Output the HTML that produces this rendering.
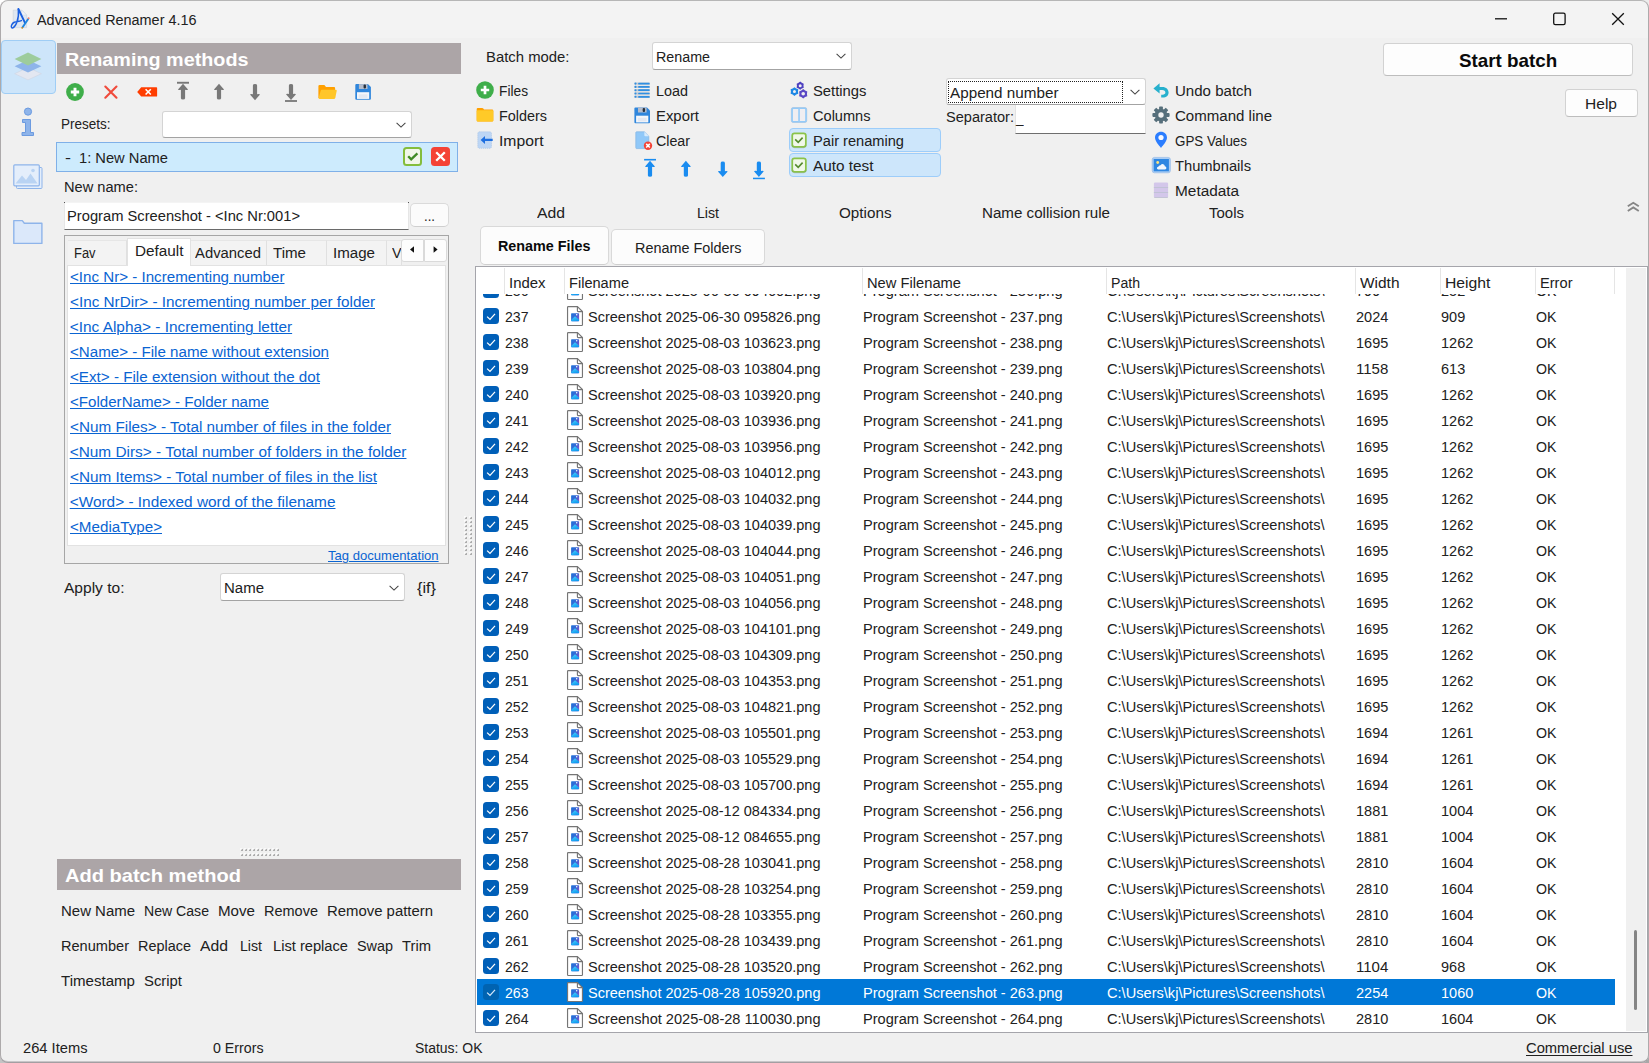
<!DOCTYPE html><html><head><meta charset="utf-8"><title>Advanced Renamer 4.16</title><style>
html,body{margin:0;padding:0;background:#fff;}
body{width:1649px;height:1063px;overflow:hidden;position:relative;font-family:"Liberation Sans", sans-serif;font-size:15.4px;color:#212121;}
#win{position:absolute;left:0;top:0;width:1649px;height:1063px;overflow:hidden;}
#win div{position:absolute;box-sizing:border-box;}
#win svg{position:absolute;overflow:visible;}
.t{position:absolute;white-space:pre;line-height:1;transform-origin:0 50%;}
.lnk{text-decoration:underline;text-underline-offset:1px;text-decoration-thickness:1px;}

</style></head><body><div id="win">
<div style="left:0px;top:1051px;width:12px;height:12px;background:#c4c4c4;"></div>
<div style="left:1637px;top:1051px;width:12px;height:12px;background:#a8a8a8;"></div>
<div style="left:1637px;top:0px;width:12px;height:12px;background:#ececec;"></div>
<div style="left:0px;top:0px;width:1649px;height:1063px;background:#f0f0f0;border-radius:8px;"></div>
<div style="left:0px;top:0px;width:1649px;height:38px;background:#f3f3f3;border-radius:8px 8px 0 0;"></div>
<svg style="left:10px;top:7px" width="21" height="23" viewBox="0 0 21 23">
<path d="M3.2 3.2h8.6l4.8 4.8v12.6h-13.4z" fill="#dfe7f1" stroke="#ced6e0" stroke-width="0.7"/><path d="M11.8 3.2v4.8h4.8z" fill="#f2f5f9" stroke="#ced6e0" stroke-width="0.5"/>
<path d="M8.4 2C8.7 6 8.4 11.3 6.9 15.3C5.7 18.4 3.5 21.6 1.9 20.8C0.5 20 1.6 16.4 4.3 15.3C6.6 14.4 9 14.6 11.4 13.6" fill="none" stroke="#1a5fe0" stroke-width="1.5" stroke-linecap="round"/>
<path d="M8.4 2L15 15.8" fill="none" stroke="#1a5fe0" stroke-width="1.9" stroke-linecap="round"/>
<path d="M18.2 12L12.6 20.2" stroke="#1d86e0" stroke-width="1.9" stroke-linecap="round"/>
<circle cx="18.6" cy="11.2" r="1" fill="#f08070"/><circle cx="12.2" cy="20.8" r="0.9" fill="#c98a1a"/>
</svg>
<svg style="left:1494px;top:12px" width="132" height="14" viewBox="0 0 132 14" fill="none" stroke="#111" stroke-width="1.3"><path d="M1 6.8h12"/><rect x="59.7" y="1.2" width="11.4" height="11.4" rx="1.6"/><path d="M118.2 1.2L129.8 12.8M129.8 1.2L118.2 12.8"/></svg>
<div style="left:1px;top:40px;width:55px;height:54px;background:#cde5fa;border:1px solid #9fcdf5;border-radius:4px;"></div>
<svg style="left:14px;top:52px" width="28" height="28" viewBox="0 0 28 28">
<path d="M14 15.5L27.4 21.7L14 27.9L0.6 21.7Z" fill="#e3e7f1" stroke="#cfd5e3" stroke-width="0.6"/>
<path d="M14 8L27.4 14.2L14 20.4L0.6 14.2Z" fill="#8eb4ea"/>
<path d="M14 0.6L27.4 7L14 13.4L0.6 7Z" fill="#9dcc9c"/></svg>
<svg style="left:21px;top:107px" width="14" height="30" viewBox="0 0 14 30"><circle cx="7" cy="4.6" r="3.6" fill="#8eb4ea" stroke="#6c9be0" stroke-width="1"/>
<path d="M1.5 12.5h8v13h3v3h-11.5v-3h3.5v-10h-3z" fill="#8eb4ea" stroke="#6c9be0" stroke-width="1" stroke-linejoin="round"/></svg>
<svg style="left:13px;top:164px" width="30" height="26" viewBox="0 0 30 26"><rect x="3.5" y="3.5" width="25.5" height="21" rx="1" fill="#e4eefb" stroke="#8eb4ea" stroke-width="1"/>
<rect x="0.8" y="0.8" width="25.5" height="21" rx="1" fill="#e4eefb" stroke="#8eb4ea" stroke-width="1.2"/>
<path d="M2.5 19.5L9 11.5L13 16L17.5 9.5L24.5 19.5Z" fill="#b9d3f3"/><circle cx="20" cy="6.5" r="1.8" fill="#b9d3f3"/></svg>
<svg style="left:13px;top:219px" width="30" height="26" viewBox="0 0 30 26"><path d="M0.8 1.6h8.5l2 2.6h17.6v20.2h-28.1z" fill="#dbe8fa" stroke="#8eb4ea" stroke-width="1.4" stroke-linejoin="round"/></svg>
<div style="left:57px;top:43px;width:404px;height:31px;background:#aca5a7;"></div>
<svg style="left:65px;top:80px" width="310" height="24" viewBox="0 0 310 24">
<circle cx="10" cy="12" r="8.9" fill="#3fae4a"/><path d="M10 7.8v8.4M5.8 12h8.4" stroke="#fff" stroke-width="2.9"/>
<path d="M40.3 6.5L51.5 17.7M51.5 6.5L40.3 17.7" stroke="#f04b3c" stroke-width="2.1" stroke-linecap="round"/>
<path d="M72.2 12L76.2 7.3H91.4Q92.1 7.3 92.1 8V15.9Q92.1 16.6 91.4 16.6H76.2Z" fill="#ff3d00"/><path d="M80.6 9.3L85.8 14.5M85.8 9.3L80.6 14.5" stroke="#fff" stroke-width="1.6"/>
<g fill="#787878"><rect x="112" y="1.8" width="12" height="1.9"/><path d="M118 3.8L123 9.399999999999999Q122.4 10.299999999999999 120.1 9.7V18.200000000000003Q120.1 19.6 118 19.6Q115.9 19.6 115.9 18.200000000000003V9.7Q113.6 10.299999999999999 113 9.399999999999999Z"/>
<path d="M154 3.8L159 9.399999999999999Q158.4 10.299999999999999 156.1 9.7V18.200000000000003Q156.1 19.6 154 19.6Q151.9 19.6 151.9 18.200000000000003V9.7Q149.6 10.299999999999999 149 9.399999999999999Z"/>
<path d="M190 20.2L195 14.6Q194.4 13.7 192.1 14.299999999999999V5.5Q192.1 4.1 190 4.1Q187.9 4.1 187.9 5.5V14.299999999999999Q185.6 13.7 185 14.6Z"/>
<path d="M226 19.9L231 14.299999999999999Q230.4 13.399999999999999 228.1 13.999999999999998V5.5Q228.1 4.1 226 4.1Q223.9 4.1 223.9 5.5V13.999999999999998Q221.6 13.399999999999999 221 14.299999999999999Z"/><rect x="220" y="20.1" width="12" height="1.8"/></g>
<path d="M254.6 4.9H259.4L261.0 6.9H269.09999999999997Q270.09999999999997 6.9 270.09999999999997 7.9V17.9H253.4V6.1000000000000005Q253.4 4.9 254.6 4.9Z" fill="#ffa000"/><path d="M256.8 9.8H270.9Q271.9 9.8 271.7 10.9L270.2 17.9Q270.0 18.9 269.0 18.9H254.4Q253.4 18.9 253.70000000000002 17.7L255.70000000000002 10.8Q255.9 9.8 256.8 9.8Z" fill="#ffc629"/>
<path d="M291.3 4.1H302.90000000000003L305.90000000000003 7.1V18.7Q305.90000000000003 19.7 304.90000000000003 19.7H291.3Q290.3 19.7 290.3 18.7V5.1Q290.3 4.1 291.3 4.1Z" fill="#2f86dc"/><rect x="293.90000000000003" y="4.1" width="8.6" height="4.9" fill="#b4bccb"/><rect x="298.568" y="4.6" width="2.4" height="3.8" rx="1" fill="#26303c"/><rect x="292.0" y="12.2" width="12.2" height="6.699999999999999" fill="#f4f7fb"/><rect x="293.7" y="14.299999999999999" width="8.8" height="3.6" fill="#e4e9f2"/></svg>
<div style="left:162px;top:111px;width:250px;height:27px;background:#fff;border:1px solid #d4d4d4;border-bottom-color:#a3a3a3;border-radius:3px;"></div>
<svg style="left:395px;top:121px" width="12" height="8" viewBox="0 0 12 8"><path d="M1.6 1.8L6 6.1L10.4 1.8" fill="none" stroke="#444" stroke-width="1.05"/></svg>
<div style="left:56px;top:142px;width:402px;height:30px;background:#cdebfd;border:1px solid #7fb0e8;"></div>
<div style="left:403px;top:147px;width:19px;height:19px;background:#f1f6e9;border:2px solid #84bd3c;border-radius:3.5px;"></div>
<svg style="left:406px;top:150px" width="13" height="13" viewBox="0 0 13 13"><path d="M2.2 6.2L5.2 9.4L11.4 3.4" fill="none" stroke="#3f8a24" stroke-width="2.3"/></svg>
<div style="left:431px;top:147px;width:19px;height:19px;background:#f44336;border-radius:3.5px;"></div>
<svg style="left:434px;top:150px" width="13" height="13" viewBox="0 0 13 13"><path d="M2.2 2.2L10.8 10.8M10.8 2.2L2.2 10.8" fill="none" stroke="#fff" stroke-width="2.3"/></svg>
<div style="left:64px;top:202px;width:345px;height:28px;background:#fff;border:1px solid #e6e6e6;border-top-color:#f4f4f4;border-bottom:1px solid #6a6a6a;"></div>
<div style="left:64px;top:202px;width:1px;height:1px;background:#555;"></div>
<div style="left:408px;top:202px;width:1px;height:1px;background:#555;"></div>
<div style="left:410px;top:203px;width:39px;height:24px;background:#fbfbfb;border:1px solid #dadada;border-bottom-color:#cfcfcf;border-radius:5px;"></div>
<div style="left:64px;top:235px;width:385px;height:329px;border:1px solid #a6a6a6;background:#f0f0f0;"></div>
<div style="left:67px;top:265px;width:379px;height:281px;background:#fff;border:1px solid #e2e2e2;"></div>
<div style="left:68px;top:240px;width:59px;height:25px;background:#f3f3f3;border-right:1px solid #e0e0e0;border-top:1px solid #e6e6e6;"></div>
<div style="left:190px;top:240px;width:77px;height:25px;background:#f3f3f3;border-right:1px solid #e0e0e0;border-top:1px solid #e6e6e6;"></div>
<div style="left:267px;top:240px;width:60px;height:25px;background:#f3f3f3;border-right:1px solid #e0e0e0;border-top:1px solid #e6e6e6;"></div>
<div style="left:327px;top:240px;width:60px;height:25px;background:#f3f3f3;border-right:1px solid #e0e0e0;border-top:1px solid #e6e6e6;"></div>
<div style="left:387px;top:240px;width:15px;height:25px;background:#f3f3f3;border-right:1px solid #e0e0e0;border-top:1px solid #e6e6e6;"></div>
<div style="left:127px;top:238px;width:64px;height:28px;background:#fff;border:1px solid #e2e2e2;border-bottom:none;"></div>
<div style="left:387px;top:241px;width:14px;height:23px;overflow:hidden;"><span class="t" style="left:4.5px;top:4px;transform:scaleX(.93);">V</span></div>
<div style="left:401px;top:239px;width:23px;height:23px;background:#fdfdfd;border:1px solid #dadada;border-radius:3px 0 0 3px;"></div>
<div style="left:424px;top:239px;width:23px;height:23px;background:#fdfdfd;border:1px solid #dadada;border-radius:0 3px 3px 0;"></div>
<svg style="left:401px;top:239px" width="46" height="23" viewBox="0 0 46 23"><path d="M13 7.2v6.6L9 10.5Z M32.6 7.2v6.6L36.6 10.5Z" fill="#111"/></svg>
<div style="left:220px;top:573px;width:185px;height:28px;background:#fff;border:1px solid #d4d4d4;border-bottom-color:#a3a3a3;border-radius:3px;"></div>
<svg style="left:388px;top:584px" width="12" height="8" viewBox="0 0 12 8"><path d="M1.6 1.8L6 6.1L10.4 1.8" fill="none" stroke="#444" stroke-width="1.05"/></svg>
<svg style="left:0;top:0" width="480" height="860" viewBox="0 0 480 860" shape-rendering="crispEdges"><path d="M240 848h2v2h-2z" fill="#fafafa"/><path d="M241 849h2v2h-2z" fill="#adadad"/><path d="M241 849h1v1h-1z" fill="#dedede"/><path d="M240 853h2v2h-2z" fill="#fafafa"/><path d="M241 854h2v2h-2z" fill="#adadad"/><path d="M241 854h1v1h-1z" fill="#dedede"/><path d="M244 848h2v2h-2z" fill="#fafafa"/><path d="M245 849h2v2h-2z" fill="#adadad"/><path d="M245 849h1v1h-1z" fill="#dedede"/><path d="M244 853h2v2h-2z" fill="#fafafa"/><path d="M245 854h2v2h-2z" fill="#adadad"/><path d="M245 854h1v1h-1z" fill="#dedede"/><path d="M248 848h2v2h-2z" fill="#fafafa"/><path d="M249 849h2v2h-2z" fill="#adadad"/><path d="M249 849h1v1h-1z" fill="#dedede"/><path d="M248 853h2v2h-2z" fill="#fafafa"/><path d="M249 854h2v2h-2z" fill="#adadad"/><path d="M249 854h1v1h-1z" fill="#dedede"/><path d="M252 848h2v2h-2z" fill="#fafafa"/><path d="M253 849h2v2h-2z" fill="#adadad"/><path d="M253 849h1v1h-1z" fill="#dedede"/><path d="M252 853h2v2h-2z" fill="#fafafa"/><path d="M253 854h2v2h-2z" fill="#adadad"/><path d="M253 854h1v1h-1z" fill="#dedede"/><path d="M256 848h2v2h-2z" fill="#fafafa"/><path d="M257 849h2v2h-2z" fill="#adadad"/><path d="M257 849h1v1h-1z" fill="#dedede"/><path d="M256 853h2v2h-2z" fill="#fafafa"/><path d="M257 854h2v2h-2z" fill="#adadad"/><path d="M257 854h1v1h-1z" fill="#dedede"/><path d="M260 848h2v2h-2z" fill="#fafafa"/><path d="M261 849h2v2h-2z" fill="#adadad"/><path d="M261 849h1v1h-1z" fill="#dedede"/><path d="M260 853h2v2h-2z" fill="#fafafa"/><path d="M261 854h2v2h-2z" fill="#adadad"/><path d="M261 854h1v1h-1z" fill="#dedede"/><path d="M264 848h2v2h-2z" fill="#fafafa"/><path d="M265 849h2v2h-2z" fill="#adadad"/><path d="M265 849h1v1h-1z" fill="#dedede"/><path d="M264 853h2v2h-2z" fill="#fafafa"/><path d="M265 854h2v2h-2z" fill="#adadad"/><path d="M265 854h1v1h-1z" fill="#dedede"/><path d="M268 848h2v2h-2z" fill="#fafafa"/><path d="M269 849h2v2h-2z" fill="#adadad"/><path d="M269 849h1v1h-1z" fill="#dedede"/><path d="M268 853h2v2h-2z" fill="#fafafa"/><path d="M269 854h2v2h-2z" fill="#adadad"/><path d="M269 854h1v1h-1z" fill="#dedede"/><path d="M272 848h2v2h-2z" fill="#fafafa"/><path d="M273 849h2v2h-2z" fill="#adadad"/><path d="M273 849h1v1h-1z" fill="#dedede"/><path d="M272 853h2v2h-2z" fill="#fafafa"/><path d="M273 854h2v2h-2z" fill="#adadad"/><path d="M273 854h1v1h-1z" fill="#dedede"/><path d="M276 848h2v2h-2z" fill="#fafafa"/><path d="M277 849h2v2h-2z" fill="#adadad"/><path d="M277 849h1v1h-1z" fill="#dedede"/><path d="M276 853h2v2h-2z" fill="#fafafa"/><path d="M277 854h2v2h-2z" fill="#adadad"/><path d="M277 854h1v1h-1z" fill="#dedede"/><path d="M464 516h2v2h-2z" fill="#fafafa"/><path d="M465 517h2v2h-2z" fill="#adadad"/><path d="M465 517h1v1h-1z" fill="#dedede"/><path d="M464 520h2v2h-2z" fill="#fafafa"/><path d="M465 521h2v2h-2z" fill="#adadad"/><path d="M465 521h1v1h-1z" fill="#dedede"/><path d="M464 524h2v2h-2z" fill="#fafafa"/><path d="M465 525h2v2h-2z" fill="#adadad"/><path d="M465 525h1v1h-1z" fill="#dedede"/><path d="M464 528h2v2h-2z" fill="#fafafa"/><path d="M465 529h2v2h-2z" fill="#adadad"/><path d="M465 529h1v1h-1z" fill="#dedede"/><path d="M464 532h2v2h-2z" fill="#fafafa"/><path d="M465 533h2v2h-2z" fill="#adadad"/><path d="M465 533h1v1h-1z" fill="#dedede"/><path d="M464 536h2v2h-2z" fill="#fafafa"/><path d="M465 537h2v2h-2z" fill="#adadad"/><path d="M465 537h1v1h-1z" fill="#dedede"/><path d="M464 540h2v2h-2z" fill="#fafafa"/><path d="M465 541h2v2h-2z" fill="#adadad"/><path d="M465 541h1v1h-1z" fill="#dedede"/><path d="M464 544h2v2h-2z" fill="#fafafa"/><path d="M465 545h2v2h-2z" fill="#adadad"/><path d="M465 545h1v1h-1z" fill="#dedede"/><path d="M464 548h2v2h-2z" fill="#fafafa"/><path d="M465 549h2v2h-2z" fill="#adadad"/><path d="M465 549h1v1h-1z" fill="#dedede"/><path d="M464 552h2v2h-2z" fill="#fafafa"/><path d="M465 553h2v2h-2z" fill="#adadad"/><path d="M465 553h1v1h-1z" fill="#dedede"/><path d="M469 516h2v2h-2z" fill="#fafafa"/><path d="M470 517h2v2h-2z" fill="#adadad"/><path d="M470 517h1v1h-1z" fill="#dedede"/><path d="M469 520h2v2h-2z" fill="#fafafa"/><path d="M470 521h2v2h-2z" fill="#adadad"/><path d="M470 521h1v1h-1z" fill="#dedede"/><path d="M469 524h2v2h-2z" fill="#fafafa"/><path d="M470 525h2v2h-2z" fill="#adadad"/><path d="M470 525h1v1h-1z" fill="#dedede"/><path d="M469 528h2v2h-2z" fill="#fafafa"/><path d="M470 529h2v2h-2z" fill="#adadad"/><path d="M470 529h1v1h-1z" fill="#dedede"/><path d="M469 532h2v2h-2z" fill="#fafafa"/><path d="M470 533h2v2h-2z" fill="#adadad"/><path d="M470 533h1v1h-1z" fill="#dedede"/><path d="M469 536h2v2h-2z" fill="#fafafa"/><path d="M470 537h2v2h-2z" fill="#adadad"/><path d="M470 537h1v1h-1z" fill="#dedede"/><path d="M469 540h2v2h-2z" fill="#fafafa"/><path d="M470 541h2v2h-2z" fill="#adadad"/><path d="M470 541h1v1h-1z" fill="#dedede"/><path d="M469 544h2v2h-2z" fill="#fafafa"/><path d="M470 545h2v2h-2z" fill="#adadad"/><path d="M470 545h1v1h-1z" fill="#dedede"/><path d="M469 548h2v2h-2z" fill="#fafafa"/><path d="M470 549h2v2h-2z" fill="#adadad"/><path d="M470 549h1v1h-1z" fill="#dedede"/><path d="M469 552h2v2h-2z" fill="#fafafa"/><path d="M470 553h2v2h-2z" fill="#adadad"/><path d="M470 553h1v1h-1z" fill="#dedede"/></svg>
<div style="left:57px;top:859px;width:404px;height:31px;background:#aca5a7;"></div>
<div style="left:652px;top:42px;width:200px;height:28px;background:#fff;border:1px solid #d4d4d4;border-bottom-color:#a3a3a3;border-radius:3px;"></div>
<svg style="left:835px;top:52px" width="12" height="8" viewBox="0 0 12 8"><path d="M1.6 1.8L6 6.1L10.4 1.8" fill="none" stroke="#444" stroke-width="1.05"/></svg>
<div style="left:1383px;top:43px;width:250px;height:33px;background:#fdfdfd;border:1px solid #d2d2d2;border-bottom-color:#bdbdbd;border-radius:4px;"></div>
<div style="left:1565px;top:89px;width:73px;height:28px;background:#fdfdfd;border:1px solid #d2d2d2;border-bottom-color:#bdbdbd;border-radius:4px;"></div>
<svg style="left:476px;top:81px" width="18" height="18" viewBox="0 0 18 18"><circle cx="9" cy="9" r="8.8" fill="#3fae4a"/><path d="M9 4.8v8.4M4.8 9h8.4" stroke="#fff" stroke-width="2.7"/></svg>
<svg style="left:476px;top:107px" width="18" height="16" viewBox="0 0 18 16"><path d="M0.7 2.1Q0.7 0.9 1.9 0.9H6.2Q6.9 0.9 7.3 1.5L8 2.6H16.1Q17.3 2.6 17.3 3.8V13.4Q17.3 14.5 16.1 14.5H1.9Q0.7 14.5 0.7 13.4Z" fill="#ffa000"/><path d="M0.7 4.2Q0.7 3.2 1.7 3.2H16.3Q17.3 3.2 17.3 4.2V13.4Q17.3 14.5 16.1 14.5H1.9Q0.7 14.5 0.7 13.4Z" fill="#ffca28"/></svg>
<svg style="left:477px;top:131px" width="17" height="18" viewBox="0 0 17 18"><rect x="0.8" y="0.8" width="13.7" height="16.5" rx="1.6" fill="#bdd6f5" stroke="#a3bfe2" stroke-width="0.6" stroke-dasharray="1.2 0.8"/><path d="M3.6 8.9L8 4.9V7.8H15.7V10H8V12.9Z" fill="#1e6fe0"/></svg>
<svg style="left:634px;top:82px" width="17" height="17" viewBox="0 0 17 17"><rect x="0.3" y="0.4" width="15.6" height="2.4" rx="0.6" fill="#c3cbd4"/><circle cx="1.5" cy="1.6" r="1.05" fill="#2f8fe2"/><rect x="4.2" y="0.75" width="11.4" height="1.7" rx="0.5" fill="#2f8fe2"/><rect x="0.3" y="3.7" width="15.6" height="2.4" rx="0.6" fill="#c3cbd4"/><circle cx="1.5" cy="4.9" r="1.05" fill="#2f8fe2"/><rect x="4.2" y="4.05" width="11.4" height="1.7" rx="0.5" fill="#2f8fe2"/><rect x="0.3" y="7.0" width="15.6" height="2.4" rx="0.6" fill="#c3cbd4"/><circle cx="1.5" cy="8.2" r="1.05" fill="#2f8fe2"/><rect x="4.2" y="7.35" width="11.4" height="1.7" rx="0.5" fill="#2f8fe2"/><rect x="0.3" y="10.3" width="15.6" height="2.4" rx="0.6" fill="#c3cbd4"/><circle cx="1.5" cy="11.5" r="1.05" fill="#2f8fe2"/><rect x="4.2" y="10.65" width="11.4" height="1.7" rx="0.5" fill="#2f8fe2"/><rect x="0.3" y="13.6" width="15.6" height="2.4" rx="0.6" fill="#c3cbd4"/><circle cx="1.5" cy="14.8" r="1.05" fill="#2f8fe2"/><rect x="4.2" y="13.95" width="11.4" height="1.7" rx="0.5" fill="#2f8fe2"/></svg>
<svg style="left:634px;top:107px" width="17" height="17" viewBox="0 0 17 17"><path d="M1.4 0.6H13.0L16.0 3.6V15.2Q16.0 16.2 15.0 16.2H1.4Q0.4 16.2 0.4 15.2V1.6Q0.4 0.6 1.4 0.6Z" fill="#2f86dc"/><rect x="4.0" y="0.6" width="8.6" height="4.9" fill="#b4bccb"/><rect x="8.668000000000001" y="1.1" width="2.4" height="3.8" rx="1" fill="#26303c"/><rect x="2.1" y="8.7" width="12.2" height="6.699999999999999" fill="#f4f7fb"/><rect x="3.8" y="10.799999999999999" width="8.8" height="3.6" fill="#e4e9f2"/></svg>
<svg style="left:635px;top:131px" width="19" height="19" viewBox="0 0 19 19"><path d="M1.6 0.8H9.4L13.8 5.2V16.8Q13.8 17.6 13 17.6H1.6Q0.8 17.6 0.8 16.8V1.6Q0.8 0.8 1.6 0.8Z" fill="#90c8f8" stroke="#82b4e4" stroke-width="0.7"/><path d="M9.4 0.8V4.4Q9.4 5.2 10.2 5.2H13.8Z" fill="#d6eafc"/><circle cx="13" cy="14.7" r="4.2" fill="#f44336"/><path d="M11.2 12.9L14.8 16.5M14.8 12.9L11.2 16.5" stroke="#fff" stroke-width="1.5"/></svg>
<svg style="left:640px;top:157px" width="130" height="24" viewBox="0 0 130 24"><g fill="#1a8cf0">
<rect x="4.1" y="1.9" width="11.9" height="1.6"/><path d="M10 3.8L14.9 9.399999999999999Q14.3 10.299999999999999 12.1 9.7V18.400000000000002Q12.1 19.8 10 19.8Q7.9 19.8 7.9 18.400000000000002V9.7Q5.699999999999999 10.299999999999999 5.1 9.399999999999999Z"/>
<path d="M45.9 3.8L50.8 9.399999999999999Q50.199999999999996 10.299999999999999 48.0 9.7V18.400000000000002Q48.0 19.8 45.9 19.8Q43.8 19.8 43.8 18.400000000000002V9.7Q41.6 10.299999999999999 41.0 9.399999999999999Z"/>
<path d="M82.8 20.1L87.7 14.500000000000002Q87.10000000000001 13.600000000000001 84.89999999999999 14.200000000000001V5.9Q84.89999999999999 4.5 82.8 4.5Q80.7 4.5 80.7 5.9V14.200000000000001Q78.49999999999999 13.600000000000001 77.89999999999999 14.500000000000002Z"/>
<path d="M118.9 19.9L123.80000000000001 14.299999999999999Q123.20000000000002 13.399999999999999 121.0 13.999999999999998V5.9Q121.0 4.5 118.9 4.5Q116.80000000000001 4.5 116.80000000000001 5.9V13.999999999999998Q114.6 13.399999999999999 114.0 14.299999999999999Z"/><rect x="113" y="20.7" width="11.9" height="1.5"/></g></svg>
<svg style="left:789px;top:80px" width="20" height="20" viewBox="0 0 20 20"><path d="M5.45 7.15L7.21 8.50L9.26 9.35L8.97 11.55L9.26 13.75L7.21 14.60L5.45 15.95L3.69 14.60L1.64 13.75L1.93 11.55L1.64 9.35L3.69 8.50ZM6.95 11.55A1.5 1.5 0 1 0 3.95 11.55A1.5 1.5 0 1 0 6.95 11.55Z" fill="#1e88e5" fill-rule="evenodd"/><path d="M11.20 1.60L12.84 2.86L14.75 3.65L14.48 5.70L14.75 7.75L12.84 8.54L11.20 9.80L9.56 8.54L7.65 7.75L7.92 5.70L7.65 3.65L9.56 2.86ZM12.70 5.70A1.5 1.5 0 1 0 9.70 5.70A1.5 1.5 0 1 0 12.70 5.70Z" fill="#4d40c0" fill-rule="evenodd"/><path d="M14.20 9.10L16.08 10.54L18.27 11.45L17.96 13.80L18.27 16.15L16.08 17.06L14.20 18.50L12.32 17.06L10.13 16.15L10.44 13.80L10.13 11.45L12.32 10.54ZM16.00 13.80A1.8 1.8 0 1 0 12.40 13.80A1.8 1.8 0 1 0 16.00 13.80Z" fill="#5a48c4" fill-rule="evenodd"/></svg>
<svg style="left:790px;top:106px" width="18" height="18" viewBox="0 0 18 18"><rect x="1.4" y="1.5" width="15.3" height="15" rx="1.7" fill="none" stroke="#7f9cc0" stroke-width="0.5" opacity="0.8"/><rect x="2.1" y="2.2" width="13.9" height="13.6" rx="1.2" fill="#f0eef1" stroke="#93caf8" stroke-width="1.6"/><rect x="8.2" y="2.2" width="1.7" height="13.6" fill="#9acdf8"/></svg>
<div style="left:789px;top:128px;width:152px;height:24px;background:#cde6fb;border:1px solid #9dcdfa;border-radius:4px;"></div>
<svg style="left:789px;top:128px" width="20" height="24" viewBox="0 0 20 24"><rect x="3.25" y="5.3" width="13.6" height="13.5" rx="2.3" fill="#f1f8e9" stroke="#8bc34a" stroke-width="1.75"/><path d="M2.9 17.2Q3.4 19.6 5.6 19.75H14.5Q16.7 19.6 17.2 17.2" fill="none" stroke="#7a9a6a" stroke-width="0.5" opacity="0.7"/><path d="M6.2 11.4L9.2 14.4L13.6 9.6" fill="none" stroke="#558b2f" stroke-width="1.6"/></svg>
<div style="left:789px;top:153px;width:152px;height:24px;background:#cde6fb;border:1px solid #9dcdfa;border-radius:4px;"></div>
<svg style="left:789px;top:153px" width="20" height="24" viewBox="0 0 20 24"><rect x="3.25" y="5.3" width="13.6" height="13.5" rx="2.3" fill="#f1f8e9" stroke="#8bc34a" stroke-width="1.75"/><path d="M2.9 17.2Q3.4 19.6 5.6 19.75H14.5Q16.7 19.6 17.2 17.2" fill="none" stroke="#7a9a6a" stroke-width="0.5" opacity="0.7"/><path d="M6.2 11.4L9.2 14.4L13.6 9.6" fill="none" stroke="#558b2f" stroke-width="1.6"/></svg>
<div style="left:946px;top:78px;width:200px;height:27px;background:#fff;border:1px solid #d4d4d4;border-bottom-color:#a3a3a3;border-radius:3px;"></div>
<div style="left:948px;top:81px;width:175px;height:22px;border:1px dotted #222;"></div>
<svg style="left:1129px;top:88px" width="12" height="8" viewBox="0 0 12 8"><path d="M1.6 1.8L6 6.1L10.4 1.8" fill="none" stroke="#444" stroke-width="1.05"/></svg>
<div style="left:1015px;top:105px;width:131px;height:29px;background:#fff;border:1px solid #e3e3e3;border-bottom:1px solid #6e6e6e;border-top:none;"></div>
<svg style="left:1151px;top:81px" width="20" height="18" viewBox="0 0 20 18"><path d="M8.6 2.3L2.4 7.4L8.6 12.5V9.1H11.2C13.2 9.1 14.4 10 14.4 11.5C14.4 12.9 13.3 13.7 11.6 13.7H10.2V16.6H11.8C15.3 16.6 17.6 14.6 17.6 11.5C17.6 8.3 15.2 5.9 11.4 5.9H8.6Z" fill="#27b0cd"/></svg>
<svg style="left:1152px;top:106px" width="18" height="18" viewBox="0 0 18 18"><g transform="translate(9 9)"><g fill="#566f7b"><rect x="-1.9" y="-8.6" width="3.8" height="17.2" rx="0.8"/><rect x="-1.9" y="-8.6" width="3.8" height="17.2" rx="0.8" transform="rotate(45)"/><rect x="-1.9" y="-8.6" width="3.8" height="17.2" rx="0.8" transform="rotate(90)"/><rect x="-1.9" y="-8.6" width="3.8" height="17.2" rx="0.8" transform="rotate(135)"/><circle r="6.3"/></g><circle r="2.7" fill="#f0f0f0"/></g></svg>
<svg style="left:1154px;top:131px" width="14" height="18" viewBox="0 0 14 18"><path d="M7 0.7C3.6 0.7 1 3.3 1 6.6C1 10.4 5 14.4 7 17C9 14.4 13 10.4 13 6.6C13 3.3 10.4 0.7 7 0.7Z" fill="#2b7dff"/><circle cx="7" cy="6.5" r="2.6" fill="#f6f9ff"/></svg>
<svg style="left:1151px;top:156px" width="21" height="18" viewBox="0 0 21 18"><rect x="1.2" y="1.4" width="18.2" height="15.4" rx="2.2" fill="#a9cdf5" stroke="#8fb6e6" stroke-width="0.6"/><rect x="2.7" y="3" width="15.2" height="12.3" fill="#2f87e2"/><circle cx="6.7" cy="6.5" r="1.4" fill="#ffe27a"/><path d="M7.2 13.4Q5.9 13.4 5.9 12.1Q5.9 10.9 7.3 10.8Q7.8 9.1 9.6 9.2Q10.6 7.7 12.3 8.2Q13.8 8.7 13.8 10.3Q15.4 10.5 15.4 12Q15.4 13.4 14 13.4Z" fill="#f2f7fd"/></svg>
<svg style="left:1153px;top:182px" width="16" height="16" viewBox="0 0 16 16"><rect x="0.9" y="0.5" width="14.2" height="14.9" rx="1.2" fill="#d3c7ea"/><path d="M0.9 5.5H15.1M0.9 10.5H15.1" stroke="#bcc0d0" stroke-width="0.8"/><path d="M1.2 15.5H14.8" stroke="#b0b4c4" stroke-width="0.6"/></svg>
<svg style="left:1627px;top:201px" width="13" height="12" viewBox="0 0 13 12"><path d="M0.8 5.3L6.3 1.8L11.8 5.3M0.8 10L6.3 6.5L11.8 10" fill="none" stroke="#868686" stroke-width="1.9"/></svg>
<div style="left:480px;top:226px;width:129px;height:39px;background:#fcfcfc;border:1px solid #d9d9d9;border-bottom-color:#cfcfcf;border-radius:5px;"></div>
<div style="left:611px;top:229px;width:154px;height:36px;background:#fcfcfc;border:1px solid #d9d9d9;border-bottom-color:#cfcfcf;border-radius:5px;"></div>
<svg width="0" height="0" style="left:0;top:0"><defs><linearGradient id="pg" x1="0" y1="0" x2="1" y2="0.6"><stop offset="0" stop-color="#1d74da"/><stop offset="0.6" stop-color="#3a66d4"/><stop offset="1" stop-color="#7a52c8"/></linearGradient><linearGradient id="pm" x1="0" y1="0" x2="0.5" y2="1"><stop offset="0" stop-color="#4cd8ff"/><stop offset="1" stop-color="#129af0"/></linearGradient></defs></svg>
<div style="left:475px;top:266px;width:1173px;height:767px;background:#fff;border:1px solid #a5a5ab;"></div>
<div style="left:1626px;top:268px;width:20px;height:763px;background:#f0f0f0;"></div>
<div style="left:1634px;top:930px;width:3px;height:80px;background:#858585;border-radius:1.5px;"></div>
<div style="left:483px;top:282px;width:16px;height:16px;background:#005fb8;border-radius:3.5px;"></div>
<svg style="left:483px;top:282px" width="16" height="16" viewBox="0 0 16 16"><path d="M4.1 8.6L7 11.4L12 5.8" fill="none" stroke="#fff" stroke-width="1.25"/></svg>
<svg style="left:567px;top:280px" width="16" height="20" viewBox="0 0 16 20"><path d="M1.3 0.55H10.4L15.45 5.6V18.7Q15.45 19.45 14.7 19.45H1.3Q0.55 19.45 0.55 18.7V1.3Q0.55 0.55 1.3 0.55Z" fill="#fff" stroke="#757575" stroke-width="1.15"/><path d="M10.4 0.55V4.8Q10.4 5.6 11.2 5.6H15.45" fill="none" stroke="#757575" stroke-width="1.15"/><rect x="4.1" y="7.3" width="8" height="7.9" rx="0.7" fill="url(#pg)"/><path d="M4.1 14.1L8 10.2L12.1 13.5V14.5Q12.1 15.2 11.4 15.2H4.8Q4.1 15.2 4.1 14.5Z" fill="url(#pm)"/><circle cx="9.7" cy="8.8" r="0.75" fill="#fff"/></svg>
<div style="left:483px;top:308px;width:16px;height:16px;background:#005fb8;border-radius:3.5px;"></div>
<svg style="left:483px;top:308px" width="16" height="16" viewBox="0 0 16 16"><path d="M4.1 8.6L7 11.4L12 5.8" fill="none" stroke="#fff" stroke-width="1.25"/></svg>
<svg style="left:567px;top:306px" width="16" height="20" viewBox="0 0 16 20"><path d="M1.3 0.55H10.4L15.45 5.6V18.7Q15.45 19.45 14.7 19.45H1.3Q0.55 19.45 0.55 18.7V1.3Q0.55 0.55 1.3 0.55Z" fill="#fff" stroke="#757575" stroke-width="1.15"/><path d="M10.4 0.55V4.8Q10.4 5.6 11.2 5.6H15.45" fill="none" stroke="#757575" stroke-width="1.15"/><rect x="4.1" y="7.3" width="8" height="7.9" rx="0.7" fill="url(#pg)"/><path d="M4.1 14.1L8 10.2L12.1 13.5V14.5Q12.1 15.2 11.4 15.2H4.8Q4.1 15.2 4.1 14.5Z" fill="url(#pm)"/><circle cx="9.7" cy="8.8" r="0.75" fill="#fff"/></svg>
<div style="left:483px;top:334px;width:16px;height:16px;background:#005fb8;border-radius:3.5px;"></div>
<svg style="left:483px;top:334px" width="16" height="16" viewBox="0 0 16 16"><path d="M4.1 8.6L7 11.4L12 5.8" fill="none" stroke="#fff" stroke-width="1.25"/></svg>
<svg style="left:567px;top:332px" width="16" height="20" viewBox="0 0 16 20"><path d="M1.3 0.55H10.4L15.45 5.6V18.7Q15.45 19.45 14.7 19.45H1.3Q0.55 19.45 0.55 18.7V1.3Q0.55 0.55 1.3 0.55Z" fill="#fff" stroke="#757575" stroke-width="1.15"/><path d="M10.4 0.55V4.8Q10.4 5.6 11.2 5.6H15.45" fill="none" stroke="#757575" stroke-width="1.15"/><rect x="4.1" y="7.3" width="8" height="7.9" rx="0.7" fill="url(#pg)"/><path d="M4.1 14.1L8 10.2L12.1 13.5V14.5Q12.1 15.2 11.4 15.2H4.8Q4.1 15.2 4.1 14.5Z" fill="url(#pm)"/><circle cx="9.7" cy="8.8" r="0.75" fill="#fff"/></svg>
<div style="left:483px;top:360px;width:16px;height:16px;background:#005fb8;border-radius:3.5px;"></div>
<svg style="left:483px;top:360px" width="16" height="16" viewBox="0 0 16 16"><path d="M4.1 8.6L7 11.4L12 5.8" fill="none" stroke="#fff" stroke-width="1.25"/></svg>
<svg style="left:567px;top:358px" width="16" height="20" viewBox="0 0 16 20"><path d="M1.3 0.55H10.4L15.45 5.6V18.7Q15.45 19.45 14.7 19.45H1.3Q0.55 19.45 0.55 18.7V1.3Q0.55 0.55 1.3 0.55Z" fill="#fff" stroke="#757575" stroke-width="1.15"/><path d="M10.4 0.55V4.8Q10.4 5.6 11.2 5.6H15.45" fill="none" stroke="#757575" stroke-width="1.15"/><rect x="4.1" y="7.3" width="8" height="7.9" rx="0.7" fill="url(#pg)"/><path d="M4.1 14.1L8 10.2L12.1 13.5V14.5Q12.1 15.2 11.4 15.2H4.8Q4.1 15.2 4.1 14.5Z" fill="url(#pm)"/><circle cx="9.7" cy="8.8" r="0.75" fill="#fff"/></svg>
<div style="left:483px;top:386px;width:16px;height:16px;background:#005fb8;border-radius:3.5px;"></div>
<svg style="left:483px;top:386px" width="16" height="16" viewBox="0 0 16 16"><path d="M4.1 8.6L7 11.4L12 5.8" fill="none" stroke="#fff" stroke-width="1.25"/></svg>
<svg style="left:567px;top:384px" width="16" height="20" viewBox="0 0 16 20"><path d="M1.3 0.55H10.4L15.45 5.6V18.7Q15.45 19.45 14.7 19.45H1.3Q0.55 19.45 0.55 18.7V1.3Q0.55 0.55 1.3 0.55Z" fill="#fff" stroke="#757575" stroke-width="1.15"/><path d="M10.4 0.55V4.8Q10.4 5.6 11.2 5.6H15.45" fill="none" stroke="#757575" stroke-width="1.15"/><rect x="4.1" y="7.3" width="8" height="7.9" rx="0.7" fill="url(#pg)"/><path d="M4.1 14.1L8 10.2L12.1 13.5V14.5Q12.1 15.2 11.4 15.2H4.8Q4.1 15.2 4.1 14.5Z" fill="url(#pm)"/><circle cx="9.7" cy="8.8" r="0.75" fill="#fff"/></svg>
<div style="left:483px;top:412px;width:16px;height:16px;background:#005fb8;border-radius:3.5px;"></div>
<svg style="left:483px;top:412px" width="16" height="16" viewBox="0 0 16 16"><path d="M4.1 8.6L7 11.4L12 5.8" fill="none" stroke="#fff" stroke-width="1.25"/></svg>
<svg style="left:567px;top:410px" width="16" height="20" viewBox="0 0 16 20"><path d="M1.3 0.55H10.4L15.45 5.6V18.7Q15.45 19.45 14.7 19.45H1.3Q0.55 19.45 0.55 18.7V1.3Q0.55 0.55 1.3 0.55Z" fill="#fff" stroke="#757575" stroke-width="1.15"/><path d="M10.4 0.55V4.8Q10.4 5.6 11.2 5.6H15.45" fill="none" stroke="#757575" stroke-width="1.15"/><rect x="4.1" y="7.3" width="8" height="7.9" rx="0.7" fill="url(#pg)"/><path d="M4.1 14.1L8 10.2L12.1 13.5V14.5Q12.1 15.2 11.4 15.2H4.8Q4.1 15.2 4.1 14.5Z" fill="url(#pm)"/><circle cx="9.7" cy="8.8" r="0.75" fill="#fff"/></svg>
<div style="left:483px;top:438px;width:16px;height:16px;background:#005fb8;border-radius:3.5px;"></div>
<svg style="left:483px;top:438px" width="16" height="16" viewBox="0 0 16 16"><path d="M4.1 8.6L7 11.4L12 5.8" fill="none" stroke="#fff" stroke-width="1.25"/></svg>
<svg style="left:567px;top:436px" width="16" height="20" viewBox="0 0 16 20"><path d="M1.3 0.55H10.4L15.45 5.6V18.7Q15.45 19.45 14.7 19.45H1.3Q0.55 19.45 0.55 18.7V1.3Q0.55 0.55 1.3 0.55Z" fill="#fff" stroke="#757575" stroke-width="1.15"/><path d="M10.4 0.55V4.8Q10.4 5.6 11.2 5.6H15.45" fill="none" stroke="#757575" stroke-width="1.15"/><rect x="4.1" y="7.3" width="8" height="7.9" rx="0.7" fill="url(#pg)"/><path d="M4.1 14.1L8 10.2L12.1 13.5V14.5Q12.1 15.2 11.4 15.2H4.8Q4.1 15.2 4.1 14.5Z" fill="url(#pm)"/><circle cx="9.7" cy="8.8" r="0.75" fill="#fff"/></svg>
<div style="left:483px;top:464px;width:16px;height:16px;background:#005fb8;border-radius:3.5px;"></div>
<svg style="left:483px;top:464px" width="16" height="16" viewBox="0 0 16 16"><path d="M4.1 8.6L7 11.4L12 5.8" fill="none" stroke="#fff" stroke-width="1.25"/></svg>
<svg style="left:567px;top:462px" width="16" height="20" viewBox="0 0 16 20"><path d="M1.3 0.55H10.4L15.45 5.6V18.7Q15.45 19.45 14.7 19.45H1.3Q0.55 19.45 0.55 18.7V1.3Q0.55 0.55 1.3 0.55Z" fill="#fff" stroke="#757575" stroke-width="1.15"/><path d="M10.4 0.55V4.8Q10.4 5.6 11.2 5.6H15.45" fill="none" stroke="#757575" stroke-width="1.15"/><rect x="4.1" y="7.3" width="8" height="7.9" rx="0.7" fill="url(#pg)"/><path d="M4.1 14.1L8 10.2L12.1 13.5V14.5Q12.1 15.2 11.4 15.2H4.8Q4.1 15.2 4.1 14.5Z" fill="url(#pm)"/><circle cx="9.7" cy="8.8" r="0.75" fill="#fff"/></svg>
<div style="left:483px;top:490px;width:16px;height:16px;background:#005fb8;border-radius:3.5px;"></div>
<svg style="left:483px;top:490px" width="16" height="16" viewBox="0 0 16 16"><path d="M4.1 8.6L7 11.4L12 5.8" fill="none" stroke="#fff" stroke-width="1.25"/></svg>
<svg style="left:567px;top:488px" width="16" height="20" viewBox="0 0 16 20"><path d="M1.3 0.55H10.4L15.45 5.6V18.7Q15.45 19.45 14.7 19.45H1.3Q0.55 19.45 0.55 18.7V1.3Q0.55 0.55 1.3 0.55Z" fill="#fff" stroke="#757575" stroke-width="1.15"/><path d="M10.4 0.55V4.8Q10.4 5.6 11.2 5.6H15.45" fill="none" stroke="#757575" stroke-width="1.15"/><rect x="4.1" y="7.3" width="8" height="7.9" rx="0.7" fill="url(#pg)"/><path d="M4.1 14.1L8 10.2L12.1 13.5V14.5Q12.1 15.2 11.4 15.2H4.8Q4.1 15.2 4.1 14.5Z" fill="url(#pm)"/><circle cx="9.7" cy="8.8" r="0.75" fill="#fff"/></svg>
<div style="left:483px;top:516px;width:16px;height:16px;background:#005fb8;border-radius:3.5px;"></div>
<svg style="left:483px;top:516px" width="16" height="16" viewBox="0 0 16 16"><path d="M4.1 8.6L7 11.4L12 5.8" fill="none" stroke="#fff" stroke-width="1.25"/></svg>
<svg style="left:567px;top:514px" width="16" height="20" viewBox="0 0 16 20"><path d="M1.3 0.55H10.4L15.45 5.6V18.7Q15.45 19.45 14.7 19.45H1.3Q0.55 19.45 0.55 18.7V1.3Q0.55 0.55 1.3 0.55Z" fill="#fff" stroke="#757575" stroke-width="1.15"/><path d="M10.4 0.55V4.8Q10.4 5.6 11.2 5.6H15.45" fill="none" stroke="#757575" stroke-width="1.15"/><rect x="4.1" y="7.3" width="8" height="7.9" rx="0.7" fill="url(#pg)"/><path d="M4.1 14.1L8 10.2L12.1 13.5V14.5Q12.1 15.2 11.4 15.2H4.8Q4.1 15.2 4.1 14.5Z" fill="url(#pm)"/><circle cx="9.7" cy="8.8" r="0.75" fill="#fff"/></svg>
<div style="left:483px;top:542px;width:16px;height:16px;background:#005fb8;border-radius:3.5px;"></div>
<svg style="left:483px;top:542px" width="16" height="16" viewBox="0 0 16 16"><path d="M4.1 8.6L7 11.4L12 5.8" fill="none" stroke="#fff" stroke-width="1.25"/></svg>
<svg style="left:567px;top:540px" width="16" height="20" viewBox="0 0 16 20"><path d="M1.3 0.55H10.4L15.45 5.6V18.7Q15.45 19.45 14.7 19.45H1.3Q0.55 19.45 0.55 18.7V1.3Q0.55 0.55 1.3 0.55Z" fill="#fff" stroke="#757575" stroke-width="1.15"/><path d="M10.4 0.55V4.8Q10.4 5.6 11.2 5.6H15.45" fill="none" stroke="#757575" stroke-width="1.15"/><rect x="4.1" y="7.3" width="8" height="7.9" rx="0.7" fill="url(#pg)"/><path d="M4.1 14.1L8 10.2L12.1 13.5V14.5Q12.1 15.2 11.4 15.2H4.8Q4.1 15.2 4.1 14.5Z" fill="url(#pm)"/><circle cx="9.7" cy="8.8" r="0.75" fill="#fff"/></svg>
<div style="left:483px;top:568px;width:16px;height:16px;background:#005fb8;border-radius:3.5px;"></div>
<svg style="left:483px;top:568px" width="16" height="16" viewBox="0 0 16 16"><path d="M4.1 8.6L7 11.4L12 5.8" fill="none" stroke="#fff" stroke-width="1.25"/></svg>
<svg style="left:567px;top:566px" width="16" height="20" viewBox="0 0 16 20"><path d="M1.3 0.55H10.4L15.45 5.6V18.7Q15.45 19.45 14.7 19.45H1.3Q0.55 19.45 0.55 18.7V1.3Q0.55 0.55 1.3 0.55Z" fill="#fff" stroke="#757575" stroke-width="1.15"/><path d="M10.4 0.55V4.8Q10.4 5.6 11.2 5.6H15.45" fill="none" stroke="#757575" stroke-width="1.15"/><rect x="4.1" y="7.3" width="8" height="7.9" rx="0.7" fill="url(#pg)"/><path d="M4.1 14.1L8 10.2L12.1 13.5V14.5Q12.1 15.2 11.4 15.2H4.8Q4.1 15.2 4.1 14.5Z" fill="url(#pm)"/><circle cx="9.7" cy="8.8" r="0.75" fill="#fff"/></svg>
<div style="left:483px;top:594px;width:16px;height:16px;background:#005fb8;border-radius:3.5px;"></div>
<svg style="left:483px;top:594px" width="16" height="16" viewBox="0 0 16 16"><path d="M4.1 8.6L7 11.4L12 5.8" fill="none" stroke="#fff" stroke-width="1.25"/></svg>
<svg style="left:567px;top:592px" width="16" height="20" viewBox="0 0 16 20"><path d="M1.3 0.55H10.4L15.45 5.6V18.7Q15.45 19.45 14.7 19.45H1.3Q0.55 19.45 0.55 18.7V1.3Q0.55 0.55 1.3 0.55Z" fill="#fff" stroke="#757575" stroke-width="1.15"/><path d="M10.4 0.55V4.8Q10.4 5.6 11.2 5.6H15.45" fill="none" stroke="#757575" stroke-width="1.15"/><rect x="4.1" y="7.3" width="8" height="7.9" rx="0.7" fill="url(#pg)"/><path d="M4.1 14.1L8 10.2L12.1 13.5V14.5Q12.1 15.2 11.4 15.2H4.8Q4.1 15.2 4.1 14.5Z" fill="url(#pm)"/><circle cx="9.7" cy="8.8" r="0.75" fill="#fff"/></svg>
<div style="left:483px;top:620px;width:16px;height:16px;background:#005fb8;border-radius:3.5px;"></div>
<svg style="left:483px;top:620px" width="16" height="16" viewBox="0 0 16 16"><path d="M4.1 8.6L7 11.4L12 5.8" fill="none" stroke="#fff" stroke-width="1.25"/></svg>
<svg style="left:567px;top:618px" width="16" height="20" viewBox="0 0 16 20"><path d="M1.3 0.55H10.4L15.45 5.6V18.7Q15.45 19.45 14.7 19.45H1.3Q0.55 19.45 0.55 18.7V1.3Q0.55 0.55 1.3 0.55Z" fill="#fff" stroke="#757575" stroke-width="1.15"/><path d="M10.4 0.55V4.8Q10.4 5.6 11.2 5.6H15.45" fill="none" stroke="#757575" stroke-width="1.15"/><rect x="4.1" y="7.3" width="8" height="7.9" rx="0.7" fill="url(#pg)"/><path d="M4.1 14.1L8 10.2L12.1 13.5V14.5Q12.1 15.2 11.4 15.2H4.8Q4.1 15.2 4.1 14.5Z" fill="url(#pm)"/><circle cx="9.7" cy="8.8" r="0.75" fill="#fff"/></svg>
<div style="left:483px;top:646px;width:16px;height:16px;background:#005fb8;border-radius:3.5px;"></div>
<svg style="left:483px;top:646px" width="16" height="16" viewBox="0 0 16 16"><path d="M4.1 8.6L7 11.4L12 5.8" fill="none" stroke="#fff" stroke-width="1.25"/></svg>
<svg style="left:567px;top:644px" width="16" height="20" viewBox="0 0 16 20"><path d="M1.3 0.55H10.4L15.45 5.6V18.7Q15.45 19.45 14.7 19.45H1.3Q0.55 19.45 0.55 18.7V1.3Q0.55 0.55 1.3 0.55Z" fill="#fff" stroke="#757575" stroke-width="1.15"/><path d="M10.4 0.55V4.8Q10.4 5.6 11.2 5.6H15.45" fill="none" stroke="#757575" stroke-width="1.15"/><rect x="4.1" y="7.3" width="8" height="7.9" rx="0.7" fill="url(#pg)"/><path d="M4.1 14.1L8 10.2L12.1 13.5V14.5Q12.1 15.2 11.4 15.2H4.8Q4.1 15.2 4.1 14.5Z" fill="url(#pm)"/><circle cx="9.7" cy="8.8" r="0.75" fill="#fff"/></svg>
<div style="left:483px;top:672px;width:16px;height:16px;background:#005fb8;border-radius:3.5px;"></div>
<svg style="left:483px;top:672px" width="16" height="16" viewBox="0 0 16 16"><path d="M4.1 8.6L7 11.4L12 5.8" fill="none" stroke="#fff" stroke-width="1.25"/></svg>
<svg style="left:567px;top:670px" width="16" height="20" viewBox="0 0 16 20"><path d="M1.3 0.55H10.4L15.45 5.6V18.7Q15.45 19.45 14.7 19.45H1.3Q0.55 19.45 0.55 18.7V1.3Q0.55 0.55 1.3 0.55Z" fill="#fff" stroke="#757575" stroke-width="1.15"/><path d="M10.4 0.55V4.8Q10.4 5.6 11.2 5.6H15.45" fill="none" stroke="#757575" stroke-width="1.15"/><rect x="4.1" y="7.3" width="8" height="7.9" rx="0.7" fill="url(#pg)"/><path d="M4.1 14.1L8 10.2L12.1 13.5V14.5Q12.1 15.2 11.4 15.2H4.8Q4.1 15.2 4.1 14.5Z" fill="url(#pm)"/><circle cx="9.7" cy="8.8" r="0.75" fill="#fff"/></svg>
<div style="left:483px;top:698px;width:16px;height:16px;background:#005fb8;border-radius:3.5px;"></div>
<svg style="left:483px;top:698px" width="16" height="16" viewBox="0 0 16 16"><path d="M4.1 8.6L7 11.4L12 5.8" fill="none" stroke="#fff" stroke-width="1.25"/></svg>
<svg style="left:567px;top:696px" width="16" height="20" viewBox="0 0 16 20"><path d="M1.3 0.55H10.4L15.45 5.6V18.7Q15.45 19.45 14.7 19.45H1.3Q0.55 19.45 0.55 18.7V1.3Q0.55 0.55 1.3 0.55Z" fill="#fff" stroke="#757575" stroke-width="1.15"/><path d="M10.4 0.55V4.8Q10.4 5.6 11.2 5.6H15.45" fill="none" stroke="#757575" stroke-width="1.15"/><rect x="4.1" y="7.3" width="8" height="7.9" rx="0.7" fill="url(#pg)"/><path d="M4.1 14.1L8 10.2L12.1 13.5V14.5Q12.1 15.2 11.4 15.2H4.8Q4.1 15.2 4.1 14.5Z" fill="url(#pm)"/><circle cx="9.7" cy="8.8" r="0.75" fill="#fff"/></svg>
<div style="left:483px;top:724px;width:16px;height:16px;background:#005fb8;border-radius:3.5px;"></div>
<svg style="left:483px;top:724px" width="16" height="16" viewBox="0 0 16 16"><path d="M4.1 8.6L7 11.4L12 5.8" fill="none" stroke="#fff" stroke-width="1.25"/></svg>
<svg style="left:567px;top:722px" width="16" height="20" viewBox="0 0 16 20"><path d="M1.3 0.55H10.4L15.45 5.6V18.7Q15.45 19.45 14.7 19.45H1.3Q0.55 19.45 0.55 18.7V1.3Q0.55 0.55 1.3 0.55Z" fill="#fff" stroke="#757575" stroke-width="1.15"/><path d="M10.4 0.55V4.8Q10.4 5.6 11.2 5.6H15.45" fill="none" stroke="#757575" stroke-width="1.15"/><rect x="4.1" y="7.3" width="8" height="7.9" rx="0.7" fill="url(#pg)"/><path d="M4.1 14.1L8 10.2L12.1 13.5V14.5Q12.1 15.2 11.4 15.2H4.8Q4.1 15.2 4.1 14.5Z" fill="url(#pm)"/><circle cx="9.7" cy="8.8" r="0.75" fill="#fff"/></svg>
<div style="left:483px;top:750px;width:16px;height:16px;background:#005fb8;border-radius:3.5px;"></div>
<svg style="left:483px;top:750px" width="16" height="16" viewBox="0 0 16 16"><path d="M4.1 8.6L7 11.4L12 5.8" fill="none" stroke="#fff" stroke-width="1.25"/></svg>
<svg style="left:567px;top:748px" width="16" height="20" viewBox="0 0 16 20"><path d="M1.3 0.55H10.4L15.45 5.6V18.7Q15.45 19.45 14.7 19.45H1.3Q0.55 19.45 0.55 18.7V1.3Q0.55 0.55 1.3 0.55Z" fill="#fff" stroke="#757575" stroke-width="1.15"/><path d="M10.4 0.55V4.8Q10.4 5.6 11.2 5.6H15.45" fill="none" stroke="#757575" stroke-width="1.15"/><rect x="4.1" y="7.3" width="8" height="7.9" rx="0.7" fill="url(#pg)"/><path d="M4.1 14.1L8 10.2L12.1 13.5V14.5Q12.1 15.2 11.4 15.2H4.8Q4.1 15.2 4.1 14.5Z" fill="url(#pm)"/><circle cx="9.7" cy="8.8" r="0.75" fill="#fff"/></svg>
<div style="left:483px;top:776px;width:16px;height:16px;background:#005fb8;border-radius:3.5px;"></div>
<svg style="left:483px;top:776px" width="16" height="16" viewBox="0 0 16 16"><path d="M4.1 8.6L7 11.4L12 5.8" fill="none" stroke="#fff" stroke-width="1.25"/></svg>
<svg style="left:567px;top:774px" width="16" height="20" viewBox="0 0 16 20"><path d="M1.3 0.55H10.4L15.45 5.6V18.7Q15.45 19.45 14.7 19.45H1.3Q0.55 19.45 0.55 18.7V1.3Q0.55 0.55 1.3 0.55Z" fill="#fff" stroke="#757575" stroke-width="1.15"/><path d="M10.4 0.55V4.8Q10.4 5.6 11.2 5.6H15.45" fill="none" stroke="#757575" stroke-width="1.15"/><rect x="4.1" y="7.3" width="8" height="7.9" rx="0.7" fill="url(#pg)"/><path d="M4.1 14.1L8 10.2L12.1 13.5V14.5Q12.1 15.2 11.4 15.2H4.8Q4.1 15.2 4.1 14.5Z" fill="url(#pm)"/><circle cx="9.7" cy="8.8" r="0.75" fill="#fff"/></svg>
<div style="left:483px;top:802px;width:16px;height:16px;background:#005fb8;border-radius:3.5px;"></div>
<svg style="left:483px;top:802px" width="16" height="16" viewBox="0 0 16 16"><path d="M4.1 8.6L7 11.4L12 5.8" fill="none" stroke="#fff" stroke-width="1.25"/></svg>
<svg style="left:567px;top:800px" width="16" height="20" viewBox="0 0 16 20"><path d="M1.3 0.55H10.4L15.45 5.6V18.7Q15.45 19.45 14.7 19.45H1.3Q0.55 19.45 0.55 18.7V1.3Q0.55 0.55 1.3 0.55Z" fill="#fff" stroke="#757575" stroke-width="1.15"/><path d="M10.4 0.55V4.8Q10.4 5.6 11.2 5.6H15.45" fill="none" stroke="#757575" stroke-width="1.15"/><rect x="4.1" y="7.3" width="8" height="7.9" rx="0.7" fill="url(#pg)"/><path d="M4.1 14.1L8 10.2L12.1 13.5V14.5Q12.1 15.2 11.4 15.2H4.8Q4.1 15.2 4.1 14.5Z" fill="url(#pm)"/><circle cx="9.7" cy="8.8" r="0.75" fill="#fff"/></svg>
<div style="left:483px;top:828px;width:16px;height:16px;background:#005fb8;border-radius:3.5px;"></div>
<svg style="left:483px;top:828px" width="16" height="16" viewBox="0 0 16 16"><path d="M4.1 8.6L7 11.4L12 5.8" fill="none" stroke="#fff" stroke-width="1.25"/></svg>
<svg style="left:567px;top:826px" width="16" height="20" viewBox="0 0 16 20"><path d="M1.3 0.55H10.4L15.45 5.6V18.7Q15.45 19.45 14.7 19.45H1.3Q0.55 19.45 0.55 18.7V1.3Q0.55 0.55 1.3 0.55Z" fill="#fff" stroke="#757575" stroke-width="1.15"/><path d="M10.4 0.55V4.8Q10.4 5.6 11.2 5.6H15.45" fill="none" stroke="#757575" stroke-width="1.15"/><rect x="4.1" y="7.3" width="8" height="7.9" rx="0.7" fill="url(#pg)"/><path d="M4.1 14.1L8 10.2L12.1 13.5V14.5Q12.1 15.2 11.4 15.2H4.8Q4.1 15.2 4.1 14.5Z" fill="url(#pm)"/><circle cx="9.7" cy="8.8" r="0.75" fill="#fff"/></svg>
<div style="left:483px;top:854px;width:16px;height:16px;background:#005fb8;border-radius:3.5px;"></div>
<svg style="left:483px;top:854px" width="16" height="16" viewBox="0 0 16 16"><path d="M4.1 8.6L7 11.4L12 5.8" fill="none" stroke="#fff" stroke-width="1.25"/></svg>
<svg style="left:567px;top:852px" width="16" height="20" viewBox="0 0 16 20"><path d="M1.3 0.55H10.4L15.45 5.6V18.7Q15.45 19.45 14.7 19.45H1.3Q0.55 19.45 0.55 18.7V1.3Q0.55 0.55 1.3 0.55Z" fill="#fff" stroke="#757575" stroke-width="1.15"/><path d="M10.4 0.55V4.8Q10.4 5.6 11.2 5.6H15.45" fill="none" stroke="#757575" stroke-width="1.15"/><rect x="4.1" y="7.3" width="8" height="7.9" rx="0.7" fill="url(#pg)"/><path d="M4.1 14.1L8 10.2L12.1 13.5V14.5Q12.1 15.2 11.4 15.2H4.8Q4.1 15.2 4.1 14.5Z" fill="url(#pm)"/><circle cx="9.7" cy="8.8" r="0.75" fill="#fff"/></svg>
<div style="left:483px;top:880px;width:16px;height:16px;background:#005fb8;border-radius:3.5px;"></div>
<svg style="left:483px;top:880px" width="16" height="16" viewBox="0 0 16 16"><path d="M4.1 8.6L7 11.4L12 5.8" fill="none" stroke="#fff" stroke-width="1.25"/></svg>
<svg style="left:567px;top:878px" width="16" height="20" viewBox="0 0 16 20"><path d="M1.3 0.55H10.4L15.45 5.6V18.7Q15.45 19.45 14.7 19.45H1.3Q0.55 19.45 0.55 18.7V1.3Q0.55 0.55 1.3 0.55Z" fill="#fff" stroke="#757575" stroke-width="1.15"/><path d="M10.4 0.55V4.8Q10.4 5.6 11.2 5.6H15.45" fill="none" stroke="#757575" stroke-width="1.15"/><rect x="4.1" y="7.3" width="8" height="7.9" rx="0.7" fill="url(#pg)"/><path d="M4.1 14.1L8 10.2L12.1 13.5V14.5Q12.1 15.2 11.4 15.2H4.8Q4.1 15.2 4.1 14.5Z" fill="url(#pm)"/><circle cx="9.7" cy="8.8" r="0.75" fill="#fff"/></svg>
<div style="left:483px;top:906px;width:16px;height:16px;background:#005fb8;border-radius:3.5px;"></div>
<svg style="left:483px;top:906px" width="16" height="16" viewBox="0 0 16 16"><path d="M4.1 8.6L7 11.4L12 5.8" fill="none" stroke="#fff" stroke-width="1.25"/></svg>
<svg style="left:567px;top:904px" width="16" height="20" viewBox="0 0 16 20"><path d="M1.3 0.55H10.4L15.45 5.6V18.7Q15.45 19.45 14.7 19.45H1.3Q0.55 19.45 0.55 18.7V1.3Q0.55 0.55 1.3 0.55Z" fill="#fff" stroke="#757575" stroke-width="1.15"/><path d="M10.4 0.55V4.8Q10.4 5.6 11.2 5.6H15.45" fill="none" stroke="#757575" stroke-width="1.15"/><rect x="4.1" y="7.3" width="8" height="7.9" rx="0.7" fill="url(#pg)"/><path d="M4.1 14.1L8 10.2L12.1 13.5V14.5Q12.1 15.2 11.4 15.2H4.8Q4.1 15.2 4.1 14.5Z" fill="url(#pm)"/><circle cx="9.7" cy="8.8" r="0.75" fill="#fff"/></svg>
<div style="left:483px;top:932px;width:16px;height:16px;background:#005fb8;border-radius:3.5px;"></div>
<svg style="left:483px;top:932px" width="16" height="16" viewBox="0 0 16 16"><path d="M4.1 8.6L7 11.4L12 5.8" fill="none" stroke="#fff" stroke-width="1.25"/></svg>
<svg style="left:567px;top:930px" width="16" height="20" viewBox="0 0 16 20"><path d="M1.3 0.55H10.4L15.45 5.6V18.7Q15.45 19.45 14.7 19.45H1.3Q0.55 19.45 0.55 18.7V1.3Q0.55 0.55 1.3 0.55Z" fill="#fff" stroke="#757575" stroke-width="1.15"/><path d="M10.4 0.55V4.8Q10.4 5.6 11.2 5.6H15.45" fill="none" stroke="#757575" stroke-width="1.15"/><rect x="4.1" y="7.3" width="8" height="7.9" rx="0.7" fill="url(#pg)"/><path d="M4.1 14.1L8 10.2L12.1 13.5V14.5Q12.1 15.2 11.4 15.2H4.8Q4.1 15.2 4.1 14.5Z" fill="url(#pm)"/><circle cx="9.7" cy="8.8" r="0.75" fill="#fff"/></svg>
<div style="left:483px;top:958px;width:16px;height:16px;background:#005fb8;border-radius:3.5px;"></div>
<svg style="left:483px;top:958px" width="16" height="16" viewBox="0 0 16 16"><path d="M4.1 8.6L7 11.4L12 5.8" fill="none" stroke="#fff" stroke-width="1.25"/></svg>
<svg style="left:567px;top:956px" width="16" height="20" viewBox="0 0 16 20"><path d="M1.3 0.55H10.4L15.45 5.6V18.7Q15.45 19.45 14.7 19.45H1.3Q0.55 19.45 0.55 18.7V1.3Q0.55 0.55 1.3 0.55Z" fill="#fff" stroke="#757575" stroke-width="1.15"/><path d="M10.4 0.55V4.8Q10.4 5.6 11.2 5.6H15.45" fill="none" stroke="#757575" stroke-width="1.15"/><rect x="4.1" y="7.3" width="8" height="7.9" rx="0.7" fill="url(#pg)"/><path d="M4.1 14.1L8 10.2L12.1 13.5V14.5Q12.1 15.2 11.4 15.2H4.8Q4.1 15.2 4.1 14.5Z" fill="url(#pm)"/><circle cx="9.7" cy="8.8" r="0.75" fill="#fff"/></svg>
<div style="left:477px;top:979px;width:1138px;height:26px;background:#0078d7;"></div>
<div style="left:483px;top:984px;width:16px;height:16px;background:#0063b1;border-radius:3.5px;"></div>
<svg style="left:483px;top:984px" width="16" height="16" viewBox="0 0 16 16"><path d="M4.1 8.6L7 11.4L12 5.8" fill="none" stroke="#d6e8fa" stroke-width="1.25"/></svg>
<svg style="left:567px;top:982px" width="16" height="20" viewBox="0 0 16 20"><path d="M1.3 0.55H10.4L15.45 5.6V18.7Q15.45 19.45 14.7 19.45H1.3Q0.55 19.45 0.55 18.7V1.3Q0.55 0.55 1.3 0.55Z" fill="#fff" stroke="#757575" stroke-width="1.15"/><path d="M10.4 0.55V4.8Q10.4 5.6 11.2 5.6H15.45" fill="none" stroke="#757575" stroke-width="1.15"/><rect x="4.1" y="7.3" width="8" height="7.9" rx="0.7" fill="url(#pg)"/><path d="M4.1 14.1L8 10.2L12.1 13.5V14.5Q12.1 15.2 11.4 15.2H4.8Q4.1 15.2 4.1 14.5Z" fill="url(#pm)"/><circle cx="9.7" cy="8.8" r="0.75" fill="#fff"/></svg>
<div style="left:483px;top:1010px;width:16px;height:16px;background:#005fb8;border-radius:3.5px;"></div>
<svg style="left:483px;top:1010px" width="16" height="16" viewBox="0 0 16 16"><path d="M4.1 8.6L7 11.4L12 5.8" fill="none" stroke="#fff" stroke-width="1.25"/></svg>
<svg style="left:567px;top:1008px" width="16" height="20" viewBox="0 0 16 20"><path d="M1.3 0.55H10.4L15.45 5.6V18.7Q15.45 19.45 14.7 19.45H1.3Q0.55 19.45 0.55 18.7V1.3Q0.55 0.55 1.3 0.55Z" fill="#fff" stroke="#757575" stroke-width="1.15"/><path d="M10.4 0.55V4.8Q10.4 5.6 11.2 5.6H15.45" fill="none" stroke="#757575" stroke-width="1.15"/><rect x="4.1" y="7.3" width="8" height="7.9" rx="0.7" fill="url(#pg)"/><path d="M4.1 14.1L8 10.2L12.1 13.5V14.5Q12.1 15.2 11.4 15.2H4.8Q4.1 15.2 4.1 14.5Z" fill="url(#pm)"/><circle cx="9.7" cy="8.8" r="0.75" fill="#fff"/></svg>
<div style="left:476px;top:267px;width:1150px;height:27px;background:#fff;z-index:2;"></div>
<div style="left:504px;top:268px;width:1px;height:26px;background:#e5e5e5;z-index:3;"></div>
<div style="left:564px;top:268px;width:1px;height:26px;background:#e5e5e5;z-index:3;"></div>
<div style="left:862px;top:268px;width:1px;height:26px;background:#e5e5e5;z-index:3;"></div>
<div style="left:1106px;top:268px;width:1px;height:26px;background:#e5e5e5;z-index:3;"></div>
<div style="left:1355px;top:268px;width:1px;height:26px;background:#e5e5e5;z-index:3;"></div>
<div style="left:1440px;top:268px;width:1px;height:26px;background:#e5e5e5;z-index:3;"></div>
<div style="left:1535px;top:268px;width:1px;height:26px;background:#e5e5e5;z-index:3;"></div>
<div style="left:1614px;top:268px;width:1px;height:26px;background:#e5e5e5;z-index:3;"></div>
<div style="left:0px;top:0px;width:1649px;height:1063px;border:1px solid #adaaab;border-top-color:#b6b6b6;border-radius:8px;pointer-events:none;z-index:9;"></div>
<div style="left:0px;top:0px;width:1649px;height:1063px;border-bottom:2px solid rgba(150,146,150,.45);border-radius:8px;pointer-events:none;z-index:9;"></div>
<span class="t" style="left:37px;top:12.00px;transform:scaleX(0.9368);">Advanced Renamer 4.16</span>
<span class="t" style="left:65px;top:50.00px;font-size:19px;font-weight:700;color:#fff;transform:scaleX(1.0408);">Renaming methods</span>
<span class="t" style="left:61px;top:116.00px;transform:scaleX(0.8768);">Presets:</span>
<span class="t" style="left:64.8px;top:150.00px;transform:scaleX(1.1672);">-</span>
<span class="t" style="left:78.8px;top:150.00px;transform:scaleX(0.9546);">1: New Name</span>
<span class="t" style="left:64px;top:179.00px;transform:scaleX(0.9506);">New name:</span>
<span class="t" style="left:67px;top:208.00px;transform:scaleX(0.9557);">Program Screenshot - &lt;Inc Nr:001&gt;</span>
<span class="t" style="left:424px;top:208.00px;transform:scaleX(0.8575);">...</span>
<span class="t" style="left:73.8px;top:245.00px;transform:scaleX(0.8380);">Fav</span>
<span class="t" style="left:134.5px;top:243.00px;transform:scaleX(0.9946);">Default</span>
<span class="t" style="left:195px;top:245.00px;transform:scaleX(0.9639);">Advanced</span>
<span class="t" style="left:273px;top:245.00px;transform:scaleX(0.9810);">Time</span>
<span class="t" style="left:333px;top:245.00px;transform:scaleX(0.9817);">Image</span>
<span class="t lnk" style="left:69.7px;top:269.00px;color:#0a64d2;transform:scaleX(0.9833);">&lt;Inc Nr&gt; - Incrementing number</span>
<span class="t lnk" style="left:69.7px;top:294.00px;color:#0a64d2;transform:scaleX(0.9932);">&lt;Inc NrDir&gt; - Incrementing number per folder</span>
<span class="t lnk" style="left:69.7px;top:319.00px;color:#0a64d2;">&lt;Inc Alpha&gt; - Incrementing letter</span>
<span class="t lnk" style="left:69.7px;top:344.00px;color:#0a64d2;transform:scaleX(0.9830);">&lt;Name&gt; - File name without extension</span>
<span class="t lnk" style="left:69.7px;top:369.00px;color:#0a64d2;transform:scaleX(0.9872);">&lt;Ext&gt; - File extension without the dot</span>
<span class="t lnk" style="left:69.7px;top:394.00px;color:#0a64d2;transform:scaleX(0.9816);">&lt;FolderName&gt; - Folder name</span>
<span class="t lnk" style="left:69.7px;top:419.00px;color:#0a64d2;transform:scaleX(0.9936);">&lt;Num Files&gt; - Total number of files in the folder</span>
<span class="t lnk" style="left:69.7px;top:444.00px;color:#0a64d2;">&lt;Num Dirs&gt; - Total number of folders in the folder</span>
<span class="t lnk" style="left:69.7px;top:469.00px;color:#0a64d2;transform:scaleX(0.9951);">&lt;Num Items&gt; - Total number of files in the list</span>
<span class="t lnk" style="left:69.7px;top:494.00px;color:#0a64d2;">&lt;Word&gt; - Indexed word of the filename</span>
<span class="t lnk" style="left:69.7px;top:519.00px;color:#0a64d2;transform:scaleX(0.9864);">&lt;MediaType&gt;</span>
<span class="t lnk" style="left:327.7px;top:550.00px;font-size:12.6px;color:#0a64d2;transform:scaleX(1.0393);">Tag documentation</span>
<span class="t" style="left:64px;top:580.00px;transform:scaleX(1.0102);">Apply to:</span>
<span class="t" style="left:224px;top:580.00px;transform:scaleX(0.9741);">Name</span>
<span class="t" style="left:417px;top:580.00px;transform:scaleX(1.0565);">{if}</span>
<span class="t" style="left:65px;top:866.00px;font-size:19px;font-weight:700;color:#fff;transform:scaleX(1.0553);">Add batch method</span>
<span class="t" style="left:61px;top:903.00px;transform:scaleX(0.9721);">New Name</span>
<span class="t" style="left:144px;top:903.00px;transform:scaleX(0.9155);">New Case</span>
<span class="t" style="left:218px;top:903.00px;transform:scaleX(0.9830);">Move</span>
<span class="t" style="left:264px;top:903.00px;transform:scaleX(0.9422);">Remove</span>
<span class="t" style="left:327px;top:903.00px;transform:scaleX(0.9679);">Remove pattern</span>
<span class="t" style="left:61px;top:938.00px;transform:scaleX(0.9463);">Renumber</span>
<span class="t" style="left:138px;top:938.00px;transform:scaleX(0.9386);">Replace</span>
<span class="t" style="left:200px;top:938.00px;transform:scaleX(1.0222);">Add</span>
<span class="t" style="left:240px;top:938.00px;transform:scaleX(0.9185);">List</span>
<span class="t" style="left:273px;top:938.00px;transform:scaleX(0.9528);">List replace</span>
<span class="t" style="left:357px;top:938.00px;transform:scaleX(0.9351);">Swap</span>
<span class="t" style="left:402px;top:938.00px;transform:scaleX(0.9602);">Trim</span>
<span class="t" style="left:61px;top:973.00px;transform:scaleX(0.9795);">Timestamp</span>
<span class="t" style="left:144px;top:973.00px;transform:scaleX(0.9658);">Script</span>
<span class="t" style="left:23px;top:1040.00px;transform:scaleX(0.9542);">264 Items</span>
<span class="t" style="left:213px;top:1040.00px;transform:scaleX(0.9226);">0 Errors</span>
<span class="t" style="left:415px;top:1040.00px;transform:scaleX(0.9070);">Status: OK</span>
<span class="t" style="left:1526px;top:1040.00px;transform:scaleX(0.9578);text-decoration:underline;text-underline-offset:1.5px;text-decoration-thickness:1px;">Commercial use</span>
<span class="t" style="left:486px;top:49.00px;transform:scaleX(0.9662);">Batch mode:</span>
<span class="t" style="left:656px;top:49.00px;transform:scaleX(0.9280);">Rename</span>
<span class="t" style="left:1458.7px;top:51.00px;font-size:19px;font-weight:700;color:#0a0a0a;transform:scaleX(0.9904);">Start batch</span>
<span class="t" style="left:1585.3px;top:96.00px;transform:scaleX(1.0109);">Help</span>
<span class="t" style="left:498.8px;top:83.00px;transform:scaleX(0.8923);">Files</span>
<span class="t" style="left:498.8px;top:108.00px;transform:scaleX(0.9352);">Folders</span>
<span class="t" style="left:498.8px;top:133.00px;transform:scaleX(1.0201);">Import</span>
<span class="t" style="left:656px;top:83.00px;transform:scaleX(0.9343);">Load</span>
<span class="t" style="left:656px;top:108.00px;transform:scaleX(0.9666);">Export</span>
<span class="t" style="left:656px;top:133.00px;transform:scaleX(0.9244);">Clear</span>
<span class="t" style="left:813px;top:83.00px;transform:scaleX(0.9618);">Settings</span>
<span class="t" style="left:813px;top:108.00px;transform:scaleX(0.9467);">Columns</span>
<span class="t" style="left:813px;top:133.00px;transform:scaleX(0.9498);">Pair renaming</span>
<span class="t" style="left:813px;top:158.00px;transform:scaleX(0.9959);">Auto test</span>
<span class="t" style="left:950px;top:85.00px;transform:scaleX(0.9906);">Append number</span>
<span class="t" style="left:946px;top:109.00px;transform:scaleX(0.9461);">Separator:</span>
<span class="t" style="left:1016.3px;top:110.00px;transform:scaleX(0.8759);">_</span>
<span class="t" style="left:1175px;top:83.00px;transform:scaleX(0.9780);">Undo batch</span>
<span class="t" style="left:1175px;top:108.00px;transform:scaleX(0.9775);">Command line</span>
<span class="t" style="left:1175px;top:133.00px;transform:scaleX(0.8706);">GPS Values</span>
<span class="t" style="left:1175px;top:158.00px;transform:scaleX(0.9552);">Thumbnails</span>
<span class="t" style="left:1175px;top:183.00px;">Metadata</span>
<span class="t" style="left:537px;top:205.00px;transform:scaleX(1.0222);">Add</span>
<span class="t" style="left:697px;top:205.00px;transform:scaleX(0.9185);">List</span>
<span class="t" style="left:838.5px;top:205.00px;transform:scaleX(0.9897);">Options</span>
<span class="t" style="left:982px;top:205.00px;transform:scaleX(0.9844);">Name collision rule</span>
<span class="t" style="left:1209px;top:205.00px;transform:scaleX(0.9739);">Tools</span>
<span class="t" style="left:498px;top:238.00px;font-weight:700;color:#0a0a0a;transform:scaleX(0.9321);">Rename Files</span>
<span class="t" style="left:634.7px;top:240.00px;transform:scaleX(0.9360);">Rename Folders</span>
<span class="t" style="left:505px;top:283.00px;transform:scaleX(0.9148);">236</span>
<span class="t" style="left:588px;top:283.00px;transform:scaleX(0.9434);">Screenshot 2025-06-30 094602.png</span>
<span class="t" style="left:863px;top:283.00px;transform:scaleX(0.9479);">Program Screenshot - 236.png</span>
<span class="t" style="left:1107px;top:283.00px;transform:scaleX(0.9488);">C:\Users\kj\Pictures\Screenshots\</span>
<span class="t" style="left:1355.8px;top:283.00px;transform:scaleX(0.9436);">799</span>
<span class="t" style="left:1440.8px;top:283.00px;transform:scaleX(0.9436);">252</span>
<span class="t" style="left:1536px;top:283.00px;transform:scaleX(0.9213);">OK</span>
<span class="t" style="left:505px;top:309.00px;transform:scaleX(0.9148);">237</span>
<span class="t" style="left:588px;top:309.00px;transform:scaleX(0.9434);">Screenshot 2025-06-30 095826.png</span>
<span class="t" style="left:863px;top:309.00px;transform:scaleX(0.9479);">Program Screenshot - 237.png</span>
<span class="t" style="left:1107px;top:309.00px;transform:scaleX(0.9488);">C:\Users\kj\Pictures\Screenshots\</span>
<span class="t" style="left:1355.8px;top:309.00px;transform:scaleX(0.9436);">2024</span>
<span class="t" style="left:1440.8px;top:309.00px;transform:scaleX(0.9436);">909</span>
<span class="t" style="left:1536px;top:309.00px;transform:scaleX(0.9213);">OK</span>
<span class="t" style="left:505px;top:335.00px;transform:scaleX(0.9148);">238</span>
<span class="t" style="left:588px;top:335.00px;transform:scaleX(0.9434);">Screenshot 2025-08-03 103623.png</span>
<span class="t" style="left:863px;top:335.00px;transform:scaleX(0.9479);">Program Screenshot - 238.png</span>
<span class="t" style="left:1107px;top:335.00px;transform:scaleX(0.9488);">C:\Users\kj\Pictures\Screenshots\</span>
<span class="t" style="left:1355.8px;top:335.00px;transform:scaleX(0.9436);">1695</span>
<span class="t" style="left:1440.8px;top:335.00px;transform:scaleX(0.9436);">1262</span>
<span class="t" style="left:1536px;top:335.00px;transform:scaleX(0.9213);">OK</span>
<span class="t" style="left:505px;top:361.00px;transform:scaleX(0.9148);">239</span>
<span class="t" style="left:588px;top:361.00px;transform:scaleX(0.9434);">Screenshot 2025-08-03 103804.png</span>
<span class="t" style="left:863px;top:361.00px;transform:scaleX(0.9479);">Program Screenshot - 239.png</span>
<span class="t" style="left:1107px;top:361.00px;transform:scaleX(0.9488);">C:\Users\kj\Pictures\Screenshots\</span>
<span class="t" style="left:1355.8px;top:361.00px;transform:scaleX(0.9762);">1158</span>
<span class="t" style="left:1440.8px;top:361.00px;transform:scaleX(0.9436);">613</span>
<span class="t" style="left:1536px;top:361.00px;transform:scaleX(0.9213);">OK</span>
<span class="t" style="left:505px;top:387.00px;transform:scaleX(0.9148);">240</span>
<span class="t" style="left:588px;top:387.00px;transform:scaleX(0.9434);">Screenshot 2025-08-03 103920.png</span>
<span class="t" style="left:863px;top:387.00px;transform:scaleX(0.9479);">Program Screenshot - 240.png</span>
<span class="t" style="left:1107px;top:387.00px;transform:scaleX(0.9488);">C:\Users\kj\Pictures\Screenshots\</span>
<span class="t" style="left:1355.8px;top:387.00px;transform:scaleX(0.9436);">1695</span>
<span class="t" style="left:1440.8px;top:387.00px;transform:scaleX(0.9436);">1262</span>
<span class="t" style="left:1536px;top:387.00px;transform:scaleX(0.9213);">OK</span>
<span class="t" style="left:505px;top:413.00px;transform:scaleX(0.9148);">241</span>
<span class="t" style="left:588px;top:413.00px;transform:scaleX(0.9434);">Screenshot 2025-08-03 103936.png</span>
<span class="t" style="left:863px;top:413.00px;transform:scaleX(0.9479);">Program Screenshot - 241.png</span>
<span class="t" style="left:1107px;top:413.00px;transform:scaleX(0.9488);">C:\Users\kj\Pictures\Screenshots\</span>
<span class="t" style="left:1355.8px;top:413.00px;transform:scaleX(0.9436);">1695</span>
<span class="t" style="left:1440.8px;top:413.00px;transform:scaleX(0.9436);">1262</span>
<span class="t" style="left:1536px;top:413.00px;transform:scaleX(0.9213);">OK</span>
<span class="t" style="left:505px;top:439.00px;transform:scaleX(0.9148);">242</span>
<span class="t" style="left:588px;top:439.00px;transform:scaleX(0.9434);">Screenshot 2025-08-03 103956.png</span>
<span class="t" style="left:863px;top:439.00px;transform:scaleX(0.9479);">Program Screenshot - 242.png</span>
<span class="t" style="left:1107px;top:439.00px;transform:scaleX(0.9488);">C:\Users\kj\Pictures\Screenshots\</span>
<span class="t" style="left:1355.8px;top:439.00px;transform:scaleX(0.9436);">1695</span>
<span class="t" style="left:1440.8px;top:439.00px;transform:scaleX(0.9436);">1262</span>
<span class="t" style="left:1536px;top:439.00px;transform:scaleX(0.9213);">OK</span>
<span class="t" style="left:505px;top:465.00px;transform:scaleX(0.9148);">243</span>
<span class="t" style="left:588px;top:465.00px;transform:scaleX(0.9434);">Screenshot 2025-08-03 104012.png</span>
<span class="t" style="left:863px;top:465.00px;transform:scaleX(0.9479);">Program Screenshot - 243.png</span>
<span class="t" style="left:1107px;top:465.00px;transform:scaleX(0.9488);">C:\Users\kj\Pictures\Screenshots\</span>
<span class="t" style="left:1355.8px;top:465.00px;transform:scaleX(0.9436);">1695</span>
<span class="t" style="left:1440.8px;top:465.00px;transform:scaleX(0.9436);">1262</span>
<span class="t" style="left:1536px;top:465.00px;transform:scaleX(0.9213);">OK</span>
<span class="t" style="left:505px;top:491.00px;transform:scaleX(0.9148);">244</span>
<span class="t" style="left:588px;top:491.00px;transform:scaleX(0.9434);">Screenshot 2025-08-03 104032.png</span>
<span class="t" style="left:863px;top:491.00px;transform:scaleX(0.9479);">Program Screenshot - 244.png</span>
<span class="t" style="left:1107px;top:491.00px;transform:scaleX(0.9488);">C:\Users\kj\Pictures\Screenshots\</span>
<span class="t" style="left:1355.8px;top:491.00px;transform:scaleX(0.9436);">1695</span>
<span class="t" style="left:1440.8px;top:491.00px;transform:scaleX(0.9436);">1262</span>
<span class="t" style="left:1536px;top:491.00px;transform:scaleX(0.9213);">OK</span>
<span class="t" style="left:505px;top:517.00px;transform:scaleX(0.9148);">245</span>
<span class="t" style="left:588px;top:517.00px;transform:scaleX(0.9434);">Screenshot 2025-08-03 104039.png</span>
<span class="t" style="left:863px;top:517.00px;transform:scaleX(0.9479);">Program Screenshot - 245.png</span>
<span class="t" style="left:1107px;top:517.00px;transform:scaleX(0.9488);">C:\Users\kj\Pictures\Screenshots\</span>
<span class="t" style="left:1355.8px;top:517.00px;transform:scaleX(0.9436);">1695</span>
<span class="t" style="left:1440.8px;top:517.00px;transform:scaleX(0.9436);">1262</span>
<span class="t" style="left:1536px;top:517.00px;transform:scaleX(0.9213);">OK</span>
<span class="t" style="left:505px;top:543.00px;transform:scaleX(0.9148);">246</span>
<span class="t" style="left:588px;top:543.00px;transform:scaleX(0.9434);">Screenshot 2025-08-03 104044.png</span>
<span class="t" style="left:863px;top:543.00px;transform:scaleX(0.9479);">Program Screenshot - 246.png</span>
<span class="t" style="left:1107px;top:543.00px;transform:scaleX(0.9488);">C:\Users\kj\Pictures\Screenshots\</span>
<span class="t" style="left:1355.8px;top:543.00px;transform:scaleX(0.9436);">1695</span>
<span class="t" style="left:1440.8px;top:543.00px;transform:scaleX(0.9436);">1262</span>
<span class="t" style="left:1536px;top:543.00px;transform:scaleX(0.9213);">OK</span>
<span class="t" style="left:505px;top:569.00px;transform:scaleX(0.9148);">247</span>
<span class="t" style="left:588px;top:569.00px;transform:scaleX(0.9434);">Screenshot 2025-08-03 104051.png</span>
<span class="t" style="left:863px;top:569.00px;transform:scaleX(0.9479);">Program Screenshot - 247.png</span>
<span class="t" style="left:1107px;top:569.00px;transform:scaleX(0.9488);">C:\Users\kj\Pictures\Screenshots\</span>
<span class="t" style="left:1355.8px;top:569.00px;transform:scaleX(0.9436);">1695</span>
<span class="t" style="left:1440.8px;top:569.00px;transform:scaleX(0.9436);">1262</span>
<span class="t" style="left:1536px;top:569.00px;transform:scaleX(0.9213);">OK</span>
<span class="t" style="left:505px;top:595.00px;transform:scaleX(0.9148);">248</span>
<span class="t" style="left:588px;top:595.00px;transform:scaleX(0.9434);">Screenshot 2025-08-03 104056.png</span>
<span class="t" style="left:863px;top:595.00px;transform:scaleX(0.9479);">Program Screenshot - 248.png</span>
<span class="t" style="left:1107px;top:595.00px;transform:scaleX(0.9488);">C:\Users\kj\Pictures\Screenshots\</span>
<span class="t" style="left:1355.8px;top:595.00px;transform:scaleX(0.9436);">1695</span>
<span class="t" style="left:1440.8px;top:595.00px;transform:scaleX(0.9436);">1262</span>
<span class="t" style="left:1536px;top:595.00px;transform:scaleX(0.9213);">OK</span>
<span class="t" style="left:505px;top:621.00px;transform:scaleX(0.9148);">249</span>
<span class="t" style="left:588px;top:621.00px;transform:scaleX(0.9434);">Screenshot 2025-08-03 104101.png</span>
<span class="t" style="left:863px;top:621.00px;transform:scaleX(0.9479);">Program Screenshot - 249.png</span>
<span class="t" style="left:1107px;top:621.00px;transform:scaleX(0.9488);">C:\Users\kj\Pictures\Screenshots\</span>
<span class="t" style="left:1355.8px;top:621.00px;transform:scaleX(0.9436);">1695</span>
<span class="t" style="left:1440.8px;top:621.00px;transform:scaleX(0.9436);">1262</span>
<span class="t" style="left:1536px;top:621.00px;transform:scaleX(0.9213);">OK</span>
<span class="t" style="left:505px;top:647.00px;transform:scaleX(0.9148);">250</span>
<span class="t" style="left:588px;top:647.00px;transform:scaleX(0.9434);">Screenshot 2025-08-03 104309.png</span>
<span class="t" style="left:863px;top:647.00px;transform:scaleX(0.9479);">Program Screenshot - 250.png</span>
<span class="t" style="left:1107px;top:647.00px;transform:scaleX(0.9488);">C:\Users\kj\Pictures\Screenshots\</span>
<span class="t" style="left:1355.8px;top:647.00px;transform:scaleX(0.9436);">1695</span>
<span class="t" style="left:1440.8px;top:647.00px;transform:scaleX(0.9436);">1262</span>
<span class="t" style="left:1536px;top:647.00px;transform:scaleX(0.9213);">OK</span>
<span class="t" style="left:505px;top:673.00px;transform:scaleX(0.9148);">251</span>
<span class="t" style="left:588px;top:673.00px;transform:scaleX(0.9434);">Screenshot 2025-08-03 104353.png</span>
<span class="t" style="left:863px;top:673.00px;transform:scaleX(0.9479);">Program Screenshot - 251.png</span>
<span class="t" style="left:1107px;top:673.00px;transform:scaleX(0.9488);">C:\Users\kj\Pictures\Screenshots\</span>
<span class="t" style="left:1355.8px;top:673.00px;transform:scaleX(0.9436);">1695</span>
<span class="t" style="left:1440.8px;top:673.00px;transform:scaleX(0.9436);">1262</span>
<span class="t" style="left:1536px;top:673.00px;transform:scaleX(0.9213);">OK</span>
<span class="t" style="left:505px;top:699.00px;transform:scaleX(0.9148);">252</span>
<span class="t" style="left:588px;top:699.00px;transform:scaleX(0.9434);">Screenshot 2025-08-03 104821.png</span>
<span class="t" style="left:863px;top:699.00px;transform:scaleX(0.9479);">Program Screenshot - 252.png</span>
<span class="t" style="left:1107px;top:699.00px;transform:scaleX(0.9488);">C:\Users\kj\Pictures\Screenshots\</span>
<span class="t" style="left:1355.8px;top:699.00px;transform:scaleX(0.9436);">1695</span>
<span class="t" style="left:1440.8px;top:699.00px;transform:scaleX(0.9436);">1262</span>
<span class="t" style="left:1536px;top:699.00px;transform:scaleX(0.9213);">OK</span>
<span class="t" style="left:505px;top:725.00px;transform:scaleX(0.9148);">253</span>
<span class="t" style="left:588px;top:725.00px;transform:scaleX(0.9434);">Screenshot 2025-08-03 105501.png</span>
<span class="t" style="left:863px;top:725.00px;transform:scaleX(0.9479);">Program Screenshot - 253.png</span>
<span class="t" style="left:1107px;top:725.00px;transform:scaleX(0.9488);">C:\Users\kj\Pictures\Screenshots\</span>
<span class="t" style="left:1355.8px;top:725.00px;transform:scaleX(0.9436);">1694</span>
<span class="t" style="left:1440.8px;top:725.00px;transform:scaleX(0.9436);">1261</span>
<span class="t" style="left:1536px;top:725.00px;transform:scaleX(0.9213);">OK</span>
<span class="t" style="left:505px;top:751.00px;transform:scaleX(0.9148);">254</span>
<span class="t" style="left:588px;top:751.00px;transform:scaleX(0.9434);">Screenshot 2025-08-03 105529.png</span>
<span class="t" style="left:863px;top:751.00px;transform:scaleX(0.9479);">Program Screenshot - 254.png</span>
<span class="t" style="left:1107px;top:751.00px;transform:scaleX(0.9488);">C:\Users\kj\Pictures\Screenshots\</span>
<span class="t" style="left:1355.8px;top:751.00px;transform:scaleX(0.9436);">1694</span>
<span class="t" style="left:1440.8px;top:751.00px;transform:scaleX(0.9436);">1261</span>
<span class="t" style="left:1536px;top:751.00px;transform:scaleX(0.9213);">OK</span>
<span class="t" style="left:505px;top:777.00px;transform:scaleX(0.9148);">255</span>
<span class="t" style="left:588px;top:777.00px;transform:scaleX(0.9434);">Screenshot 2025-08-03 105700.png</span>
<span class="t" style="left:863px;top:777.00px;transform:scaleX(0.9479);">Program Screenshot - 255.png</span>
<span class="t" style="left:1107px;top:777.00px;transform:scaleX(0.9488);">C:\Users\kj\Pictures\Screenshots\</span>
<span class="t" style="left:1355.8px;top:777.00px;transform:scaleX(0.9436);">1694</span>
<span class="t" style="left:1440.8px;top:777.00px;transform:scaleX(0.9436);">1261</span>
<span class="t" style="left:1536px;top:777.00px;transform:scaleX(0.9213);">OK</span>
<span class="t" style="left:505px;top:803.00px;transform:scaleX(0.9148);">256</span>
<span class="t" style="left:588px;top:803.00px;transform:scaleX(0.9434);">Screenshot 2025-08-12 084334.png</span>
<span class="t" style="left:863px;top:803.00px;transform:scaleX(0.9479);">Program Screenshot - 256.png</span>
<span class="t" style="left:1107px;top:803.00px;transform:scaleX(0.9488);">C:\Users\kj\Pictures\Screenshots\</span>
<span class="t" style="left:1355.8px;top:803.00px;transform:scaleX(0.9436);">1881</span>
<span class="t" style="left:1440.8px;top:803.00px;transform:scaleX(0.9436);">1004</span>
<span class="t" style="left:1536px;top:803.00px;transform:scaleX(0.9213);">OK</span>
<span class="t" style="left:505px;top:829.00px;transform:scaleX(0.9148);">257</span>
<span class="t" style="left:588px;top:829.00px;transform:scaleX(0.9434);">Screenshot 2025-08-12 084655.png</span>
<span class="t" style="left:863px;top:829.00px;transform:scaleX(0.9479);">Program Screenshot - 257.png</span>
<span class="t" style="left:1107px;top:829.00px;transform:scaleX(0.9488);">C:\Users\kj\Pictures\Screenshots\</span>
<span class="t" style="left:1355.8px;top:829.00px;transform:scaleX(0.9436);">1881</span>
<span class="t" style="left:1440.8px;top:829.00px;transform:scaleX(0.9436);">1004</span>
<span class="t" style="left:1536px;top:829.00px;transform:scaleX(0.9213);">OK</span>
<span class="t" style="left:505px;top:855.00px;transform:scaleX(0.9148);">258</span>
<span class="t" style="left:588px;top:855.00px;transform:scaleX(0.9434);">Screenshot 2025-08-28 103041.png</span>
<span class="t" style="left:863px;top:855.00px;transform:scaleX(0.9479);">Program Screenshot - 258.png</span>
<span class="t" style="left:1107px;top:855.00px;transform:scaleX(0.9488);">C:\Users\kj\Pictures\Screenshots\</span>
<span class="t" style="left:1355.8px;top:855.00px;transform:scaleX(0.9436);">2810</span>
<span class="t" style="left:1440.8px;top:855.00px;transform:scaleX(0.9436);">1604</span>
<span class="t" style="left:1536px;top:855.00px;transform:scaleX(0.9213);">OK</span>
<span class="t" style="left:505px;top:881.00px;transform:scaleX(0.9148);">259</span>
<span class="t" style="left:588px;top:881.00px;transform:scaleX(0.9434);">Screenshot 2025-08-28 103254.png</span>
<span class="t" style="left:863px;top:881.00px;transform:scaleX(0.9479);">Program Screenshot - 259.png</span>
<span class="t" style="left:1107px;top:881.00px;transform:scaleX(0.9488);">C:\Users\kj\Pictures\Screenshots\</span>
<span class="t" style="left:1355.8px;top:881.00px;transform:scaleX(0.9436);">2810</span>
<span class="t" style="left:1440.8px;top:881.00px;transform:scaleX(0.9436);">1604</span>
<span class="t" style="left:1536px;top:881.00px;transform:scaleX(0.9213);">OK</span>
<span class="t" style="left:505px;top:907.00px;transform:scaleX(0.9148);">260</span>
<span class="t" style="left:588px;top:907.00px;transform:scaleX(0.9434);">Screenshot 2025-08-28 103355.png</span>
<span class="t" style="left:863px;top:907.00px;transform:scaleX(0.9479);">Program Screenshot - 260.png</span>
<span class="t" style="left:1107px;top:907.00px;transform:scaleX(0.9488);">C:\Users\kj\Pictures\Screenshots\</span>
<span class="t" style="left:1355.8px;top:907.00px;transform:scaleX(0.9436);">2810</span>
<span class="t" style="left:1440.8px;top:907.00px;transform:scaleX(0.9436);">1604</span>
<span class="t" style="left:1536px;top:907.00px;transform:scaleX(0.9213);">OK</span>
<span class="t" style="left:505px;top:933.00px;transform:scaleX(0.9148);">261</span>
<span class="t" style="left:588px;top:933.00px;transform:scaleX(0.9434);">Screenshot 2025-08-28 103439.png</span>
<span class="t" style="left:863px;top:933.00px;transform:scaleX(0.9479);">Program Screenshot - 261.png</span>
<span class="t" style="left:1107px;top:933.00px;transform:scaleX(0.9488);">C:\Users\kj\Pictures\Screenshots\</span>
<span class="t" style="left:1355.8px;top:933.00px;transform:scaleX(0.9436);">2810</span>
<span class="t" style="left:1440.8px;top:933.00px;transform:scaleX(0.9436);">1604</span>
<span class="t" style="left:1536px;top:933.00px;transform:scaleX(0.9213);">OK</span>
<span class="t" style="left:505px;top:959.00px;transform:scaleX(0.9148);">262</span>
<span class="t" style="left:588px;top:959.00px;transform:scaleX(0.9434);">Screenshot 2025-08-28 103520.png</span>
<span class="t" style="left:863px;top:959.00px;transform:scaleX(0.9479);">Program Screenshot - 262.png</span>
<span class="t" style="left:1107px;top:959.00px;transform:scaleX(0.9488);">C:\Users\kj\Pictures\Screenshots\</span>
<span class="t" style="left:1355.8px;top:959.00px;transform:scaleX(0.9762);">1104</span>
<span class="t" style="left:1440.8px;top:959.00px;transform:scaleX(0.9436);">968</span>
<span class="t" style="left:1536px;top:959.00px;transform:scaleX(0.9213);">OK</span>
<span class="t" style="left:505px;top:985.00px;color:#fff;transform:scaleX(0.9148);">263</span>
<span class="t" style="left:588px;top:985.00px;color:#fff;transform:scaleX(0.9434);">Screenshot 2025-08-28 105920.png</span>
<span class="t" style="left:863px;top:985.00px;color:#fff;transform:scaleX(0.9479);">Program Screenshot - 263.png</span>
<span class="t" style="left:1107px;top:985.00px;color:#fff;transform:scaleX(0.9488);">C:\Users\kj\Pictures\Screenshots\</span>
<span class="t" style="left:1355.8px;top:985.00px;color:#fff;transform:scaleX(0.9436);">2254</span>
<span class="t" style="left:1440.8px;top:985.00px;color:#fff;transform:scaleX(0.9436);">1060</span>
<span class="t" style="left:1536px;top:985.00px;color:#fff;transform:scaleX(0.9213);">OK</span>
<span class="t" style="left:505px;top:1011.00px;transform:scaleX(0.9148);">264</span>
<span class="t" style="left:588px;top:1011.00px;transform:scaleX(0.9478);">Screenshot 2025-08-28 110030.png</span>
<span class="t" style="left:863px;top:1011.00px;transform:scaleX(0.9479);">Program Screenshot - 264.png</span>
<span class="t" style="left:1107px;top:1011.00px;transform:scaleX(0.9488);">C:\Users\kj\Pictures\Screenshots\</span>
<span class="t" style="left:1355.8px;top:1011.00px;transform:scaleX(0.9436);">2810</span>
<span class="t" style="left:1440.8px;top:1011.00px;transform:scaleX(0.9436);">1604</span>
<span class="t" style="left:1536px;top:1011.00px;transform:scaleX(0.9213);">OK</span>
<span class="t" style="left:509.3px;top:275.00px;transform:scaleX(0.9693);z-index:3;">Index</span>
<span class="t" style="left:568.8px;top:275.00px;transform:scaleX(0.9477);z-index:3;">Filename</span>
<span class="t" style="left:867px;top:275.00px;transform:scaleX(0.9555);z-index:3;">New Filename</span>
<span class="t" style="left:1111px;top:275.00px;transform:scaleX(0.9156);z-index:3;">Path</span>
<span class="t" style="left:1360px;top:275.00px;transform:scaleX(1.0040);z-index:3;">Width</span>
<span class="t" style="left:1445px;top:275.00px;transform:scaleX(1.0225);z-index:3;">Height</span>
<span class="t" style="left:1540.2px;top:275.00px;transform:scaleX(0.9502);z-index:3;">Error</span>
</div></body></html>
